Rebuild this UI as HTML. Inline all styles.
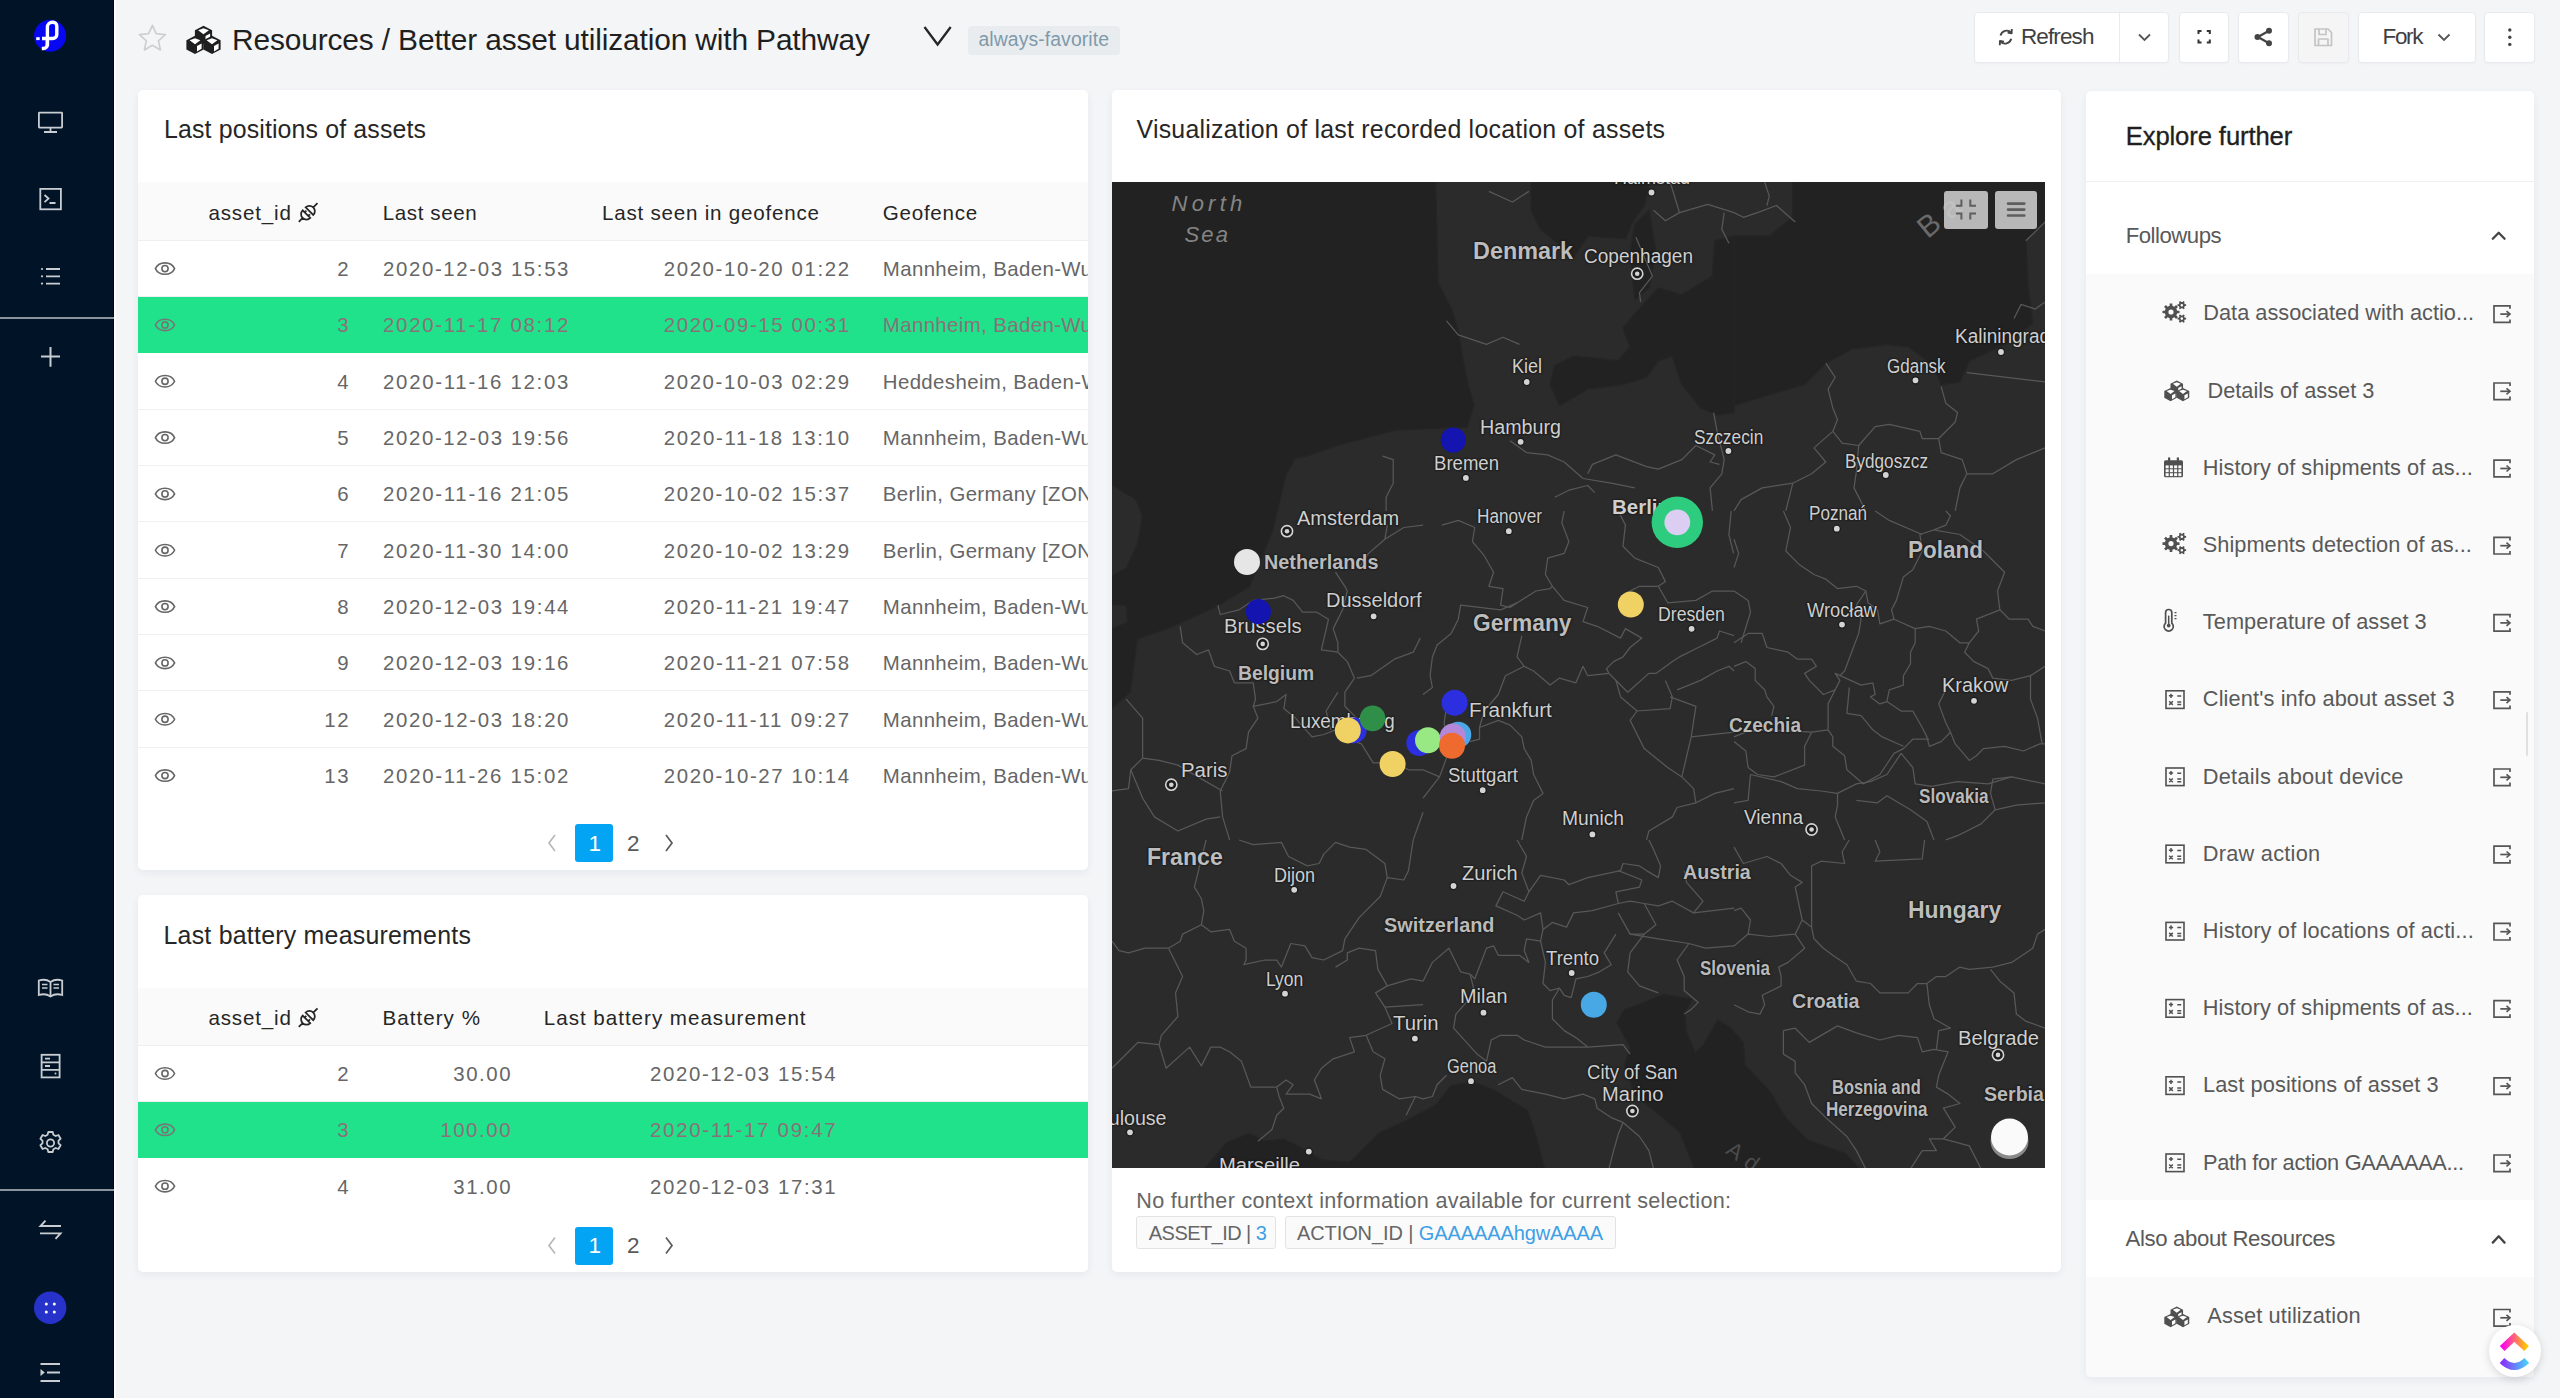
<!DOCTYPE html>
<html><head><meta charset="utf-8">
<style>
html,body{margin:0;padding:0}
body{width:2560px;height:1398px;overflow:hidden;background:#f3f5f7;font-family:"Liberation Sans",sans-serif;position:relative;color:#262626}
.a{position:absolute}
svg{position:absolute;overflow:visible}
.card{position:absolute;background:#fff;border-radius:5px;box-shadow:0 3px 8px rgba(30,50,80,0.06)}
.ctitle{position:absolute;font-size:25px;color:#262626;white-space:nowrap;line-height:30px;letter-spacing:0.1px}
.thead{position:absolute;left:0;background:#fafafa;border-bottom:1px solid #efefef;box-sizing:border-box}
.th{position:absolute;font-size:21px;color:#262626;white-space:nowrap;letter-spacing:0.5px;line-height:26px}
.row{position:absolute;left:0;height:56px;border-bottom:1px solid #f0f0f0;box-sizing:border-box;overflow:hidden}
.row.g{background:#20e28a;border-bottom-color:#20e28a}
.td{position:absolute;top:15px;font-size:20.5px;color:#666;white-space:nowrap;letter-spacing:1.55px;line-height:26px}
.row.g .td{color:#8a6e7a}
.eye{left:16px;top:20px}
.pg{position:absolute;font-size:22px;color:#595959;line-height:38px}
.pact{position:absolute;width:38px;height:38px;background:#03a4f4;border-radius:3px;color:#fff;font-size:22px;text-align:center;line-height:38px}
.btn{position:absolute;top:12px;height:51px;background:#fff;border:1px solid #e8eaed;border-radius:4px;box-sizing:border-box;box-shadow:0 1px 2px rgba(0,0,0,0.03)}
.item{position:absolute;left:0;width:449px;height:77px}
.itxt{position:absolute;left:116px;top:22px;font-size:21.5px;color:#595959;white-space:nowrap;letter-spacing:0.45px;line-height:28px}
.lbl{position:absolute;white-space:nowrap;color:#c9c9c9;font-size:18px;line-height:20px;text-shadow:0 0 2px #1a1a1a,0 0 2px #1a1a1a,1px 1px 1px #1a1a1a,-1px -1px 1px #1a1a1a}
.cty{position:absolute;white-space:nowrap;color:#bdbdbd;font-size:23px;font-weight:bold;line-height:26px;text-shadow:0 0 2px #151515,0 0 3px #151515,1px 1px 1px #151515,-1px -1px 1px #151515}
</style></head>
<body>
<div class="a" style="left:0;top:0;width:114px;height:1398px;background:#011427"></div>
<div class="a" style="left:112.5px;top:0;width:1.5px;height:1398px;background:#000510"></div>
<div class="a" style="left:114px;top:0;width:1.5px;height:1398px;background:#fdfdfd"></div>
<div class="a" style="left:0;top:317px;width:114px;height:2px;background:#8b939c"></div>
<div class="a" style="left:0;top:1189px;width:114px;height:2px;background:#8b939c"></div>
<svg width="114" height="1398" style="left:0;top:0" fill="none" stroke="#c9cdd2" stroke-width="1.8">
  <!-- logo -->
  <circle cx="50.1" cy="35.7" r="16" fill="#0707f2" stroke="none"/>
  <path d="M47.4,46 V27.3 a5,5 0 0 1 5,-5 h0.8 a3.6,3.6 0 0 1 3.6,3.6 V34.5 a4,4 0 0 1 -4,4 H42" stroke="#fff" stroke-width="3.4"/>
  <path d="M47.4,38 V44.5 a4,4 0 0 1 -4,4 h-1.6" stroke="#fff" stroke-width="3.4"/>
  <rect x="36.2" y="37.2" width="3.5" height="2.9" fill="#fff" stroke="none"/>
  <!-- monitor -->
  <rect x="38.9" y="112.6" width="23.2" height="15" rx="0.5"/>
  <path d="M50.5,127.6 V131.5 M44,132 H57"/>
  <!-- terminal -->
  <rect x="40.3" y="188.9" width="20.6" height="20.4"/>
  <path d="M44.5,195 L48.5,198.6 L44.5,202.2 M49.5,203 H55.5"/>
  <!-- list -->
  <path d="M46,269 H60 M46,276.3 H60 M46,283.6 H60"/>
  <circle cx="42" cy="269" r="1.1" fill="#c9cdd2" stroke="none"/>
  <circle cx="42" cy="276.3" r="1.1" fill="#c9cdd2" stroke="none"/>
  <circle cx="42" cy="283.6" r="1.1" fill="#c9cdd2" stroke="none"/>
  <!-- plus -->
  <path d="M41,356.5 H60 M50.5,347 V366.8" stroke-width="2"/>
  <!-- book -->
  <path d="M50.5,982 C47,979.5 42,979.5 38.8,980.5 V995 C42,994 47,994 50.5,996.5 C54,994 59,994 62.2,995 V980.5 C59,979.5 54,979.5 50.5,982 Z M50.5,982 V996"/>
  <path d="M42,984.5 H47.5 M42,988 H47.5 M53.5,984.5 H59 M53.5,988 H59" stroke-width="1.4"/>
  <!-- server -->
  <rect x="41.6" y="1054.8" width="18" height="22.6"/>
  <path d="M41.6,1062.3 H59.6 M41.6,1069.8 H59.6 M45,1058.6 H50 M45,1066 H50"/>
  <circle cx="55.5" cy="1073.6" r="1" fill="#c9cdd2" stroke="none"/>
  <!-- gear -->
  <path d="M48.3,1132 h4.4 l0.7,2.8 l2.3,1.2 l2.7,-1 l2.2,3.8 l-2.1,1.9 v2.6 l2.1,1.9 l-2.2,3.8 l-2.7,-1 l-2.3,1.2 l-0.7,2.8 h-4.4 l-0.7,-2.8 l-2.3,-1.2 l-2.7,1 l-2.2,-3.8 l2.1,-1.9 v-2.6 l-2.1,-1.9 l2.2,-3.8 l2.7,1 l2.3,-1.2 Z" stroke-linejoin="round"/>
  <circle cx="50.5" cy="1143" r="3.6"/>
  <!-- swap -->
  <path d="M61,1226 H40.5 L45.5,1220.6 M40,1233.4 H60.5 L55.5,1238.8" stroke-width="1.9"/>
  <!-- blue circle -->
  <circle cx="50.2" cy="1307.8" r="16.2" fill="#2632c9" stroke="none"/>
  <circle cx="46.3" cy="1304" r="1.5" fill="#fff" stroke="none"/>
  <circle cx="54.3" cy="1304" r="1.5" fill="#fff" stroke="none"/>
  <circle cx="46.3" cy="1312" r="1.5" fill="#fff" stroke="none"/>
  <circle cx="54.3" cy="1312" r="1.5" fill="#fff" stroke="none"/>
  <!-- indent -->
  <path d="M40.5,1364 H60 M47,1372.5 H60 M40.5,1381 H60" stroke-width="1.9"/>
  <path d="M40.5,1369 L44.8,1372.5 L40.5,1376 Z" fill="#c9cdd2" stroke="none"/>
</svg>
<svg width="1" height="1" style="left:0;top:0"><polygon points="152.40,25.30 156.16,33.72 165.33,34.70 158.49,40.88 160.39,49.90 152.40,45.30 144.41,49.90 146.31,40.88 139.47,34.70 148.64,33.72" fill="none" stroke="#cfcfcf" stroke-width="1.7" stroke-linejoin="round"/></svg>
<svg width="1" height="1" style="left:186px;top:24.6px"><g transform="scale(1.0)"><path d="M17.5,0.8000000000000014 L26.1,5.200000000000001 L26.1,14.4 L17.5,19.0 L8.9,14.4 L8.9,5.200000000000001 Z" fill="#1f1f1f"/><path d="M17.5,3.2000000000000015 L22.900000000000002,5.200000000000001 L17.5,9.3 L12.100000000000001,5.200000000000001 Z" fill="#fff"/><path d="M19.5,11.0 L24.1,8.600000000000001 L24.1,13.8 L19.5,16.4 Z" fill="#fff"/><path d="M9,10.8 L17.6,15.200000000000001 L17.6,24.4 L9,29.0 L0.40000000000000036,24.4 L0.40000000000000036,15.200000000000001 Z" fill="#1f1f1f"/><path d="M9,13.200000000000001 L14.400000000000002,15.200000000000001 L9,19.3 L3.6000000000000005,15.200000000000001 Z" fill="#fff"/><path d="M11,21.0 L15.600000000000001,18.6 L15.600000000000001,23.799999999999997 L11,26.4 Z" fill="#fff"/><path d="M26,10.8 L34.6,15.200000000000001 L34.6,24.4 L26,29.0 L17.4,24.4 L17.4,15.200000000000001 Z" fill="#1f1f1f"/><path d="M26,13.200000000000001 L31.400000000000002,15.200000000000001 L26,19.3 L20.599999999999998,15.200000000000001 Z" fill="#fff"/><path d="M28,21.0 L32.6,18.6 L32.6,23.799999999999997 L28,26.4 Z" fill="#fff"/></g></svg>
<div class="a" style="left:232.0px;top:24.9px;font-size:29.90px;line-height:29.90px;color:#1f1f1f;white-space:nowrap;letter-spacing:-0.14px;">Resources / Better asset utilization with Pathway</div>
<svg width="1" height="1" style="left:0;top:0"><polyline points="924.5,27 937.6,44.5 950.7,27" fill="none" stroke="#262626" stroke-width="2.3"/></svg>
<div class="a" style="left:968px;top:26px;width:152px;height:29px;background:#e8ecef;border-radius:4px"></div>
<div class="a" style="left:978.5px;top:29.8px;font-size:19.40px;line-height:19.40px;color:#7f9aaa;white-space:nowrap;letter-spacing:0.08px;">always-favorite</div>
<div class="btn" style="left:1974px;width:195px;background:#fff"></div>
<div class="btn" style="left:2178.6px;width:50px;background:#fff"></div>
<div class="btn" style="left:2237.7px;width:51px;background:#fff"></div>
<div class="btn" style="left:2297.5px;width:51px;background:#f5f5f5"></div>
<div class="btn" style="left:2357.7px;width:118px;background:#fff"></div>
<div class="btn" style="left:2484px;width:51px;background:#fff"></div>
<div class="a" style="left:2118.5px;top:12px;width:1px;height:52px;background:#e8eaed"></div>
<div class="a" style="left:2021.0px;top:26.2px;font-size:22.50px;line-height:22.50px;color:#3f3f3f;white-space:nowrap;letter-spacing:-0.88px;">Refresh</div>
<div class="a" style="left:2382.5px;top:26.2px;font-size:22.50px;line-height:22.50px;color:#3f3f3f;white-space:nowrap;letter-spacing:-1.33px;">Fork</div>
<svg width="1" height="1" style="left:0;top:0" fill="none" stroke="#444" stroke-width="1.9">
<path d="M2000.5,35.5 A6.3,6.3 0 0 1 2011.2,32.6" /><path d="M2011.8,29 L2011.6,33.2 L2007.6,32.6" stroke-linejoin="round"/>
<path d="M2011.2,38.8 A6.3,6.3 0 0 1 2000.5,41.6" /><path d="M1999.8,45.3 L2000,41 L2004,41.6" stroke-linejoin="round"/>
<polyline points="2139,34.5 2144.5,40 2150,34.5" stroke="#555" stroke-width="1.8"/>
<polyline points="2438.5,34.5 2444,40 2449.5,34.5" stroke="#555" stroke-width="1.8"/>
<path d="M2198.5,34 V31 H2201.5 M2206.8,31 H2209.8 V34 M2209.8,39.5 V42.5 H2206.8 M2201.5,42.5 H2198.5 V39.5" stroke="#333" stroke-width="2"/>
<path d="M2258,37 L2268.5,31 M2258,37 L2268.5,43" stroke="#444" stroke-width="2.2"/>
<path d="M2315,29 H2328 L2331.5,32.5 V45.5 H2315 Z M2319,29 V34.5 H2326 V29 M2318.5,45.5 V39 H2328 V45.5" stroke="#c4c4c4" stroke-width="1.7" stroke-linejoin="round"/>
</svg>
<svg width="1" height="1" style="left:0;top:0" fill="#444">
<circle cx="2257.5" cy="37" r="3"/><circle cx="2269" cy="30.8" r="3"/><circle cx="2269" cy="43.2" r="3"/>
<circle cx="2509.8" cy="30" r="1.7"/><circle cx="2509.8" cy="37.2" r="1.7"/><circle cx="2509.8" cy="44.4" r="1.7"/>
</svg>
<div class="card" style="left:138px;top:90px;width:950px;height:780px"></div>
<div class="a" style="left:164.0px;top:117.4px;font-size:24.90px;line-height:24.90px;color:#262626;white-space:nowrap;letter-spacing:0.14px;">Last positions of assets</div>
<div class="a" style="left:138px;top:182px;width:950px;height:58px;background:#fafafa;border-bottom:1px solid #eeeeee"></div>
<div class="a" style="left:208.4px;top:202.6px;font-size:20.60px;line-height:20.60px;color:#262626;white-space:nowrap;letter-spacing:0.84px;">asset_id</div>
<svg width="1" height="1" style="left:0;top:0" fill="none" stroke="#262626" stroke-width="1.75"><g transform="translate(308.3,212.3) rotate(-45)"><path d="M-2.6,-5.4 A5.4,5.4 0 0 0 -2.6,5.4 Z M-8,0 H-13.4 M-2.6,-2.6 H-0.2 M-2.6,2.6 H-0.2 M1.6,-5.4 A5.4,5.4 0 0 1 1.6,5.4 Z M7,0 H13"/></g></svg>
<div class="a" style="left:382.8px;top:202.6px;font-size:20.60px;line-height:20.60px;color:#262626;white-space:nowrap;letter-spacing:0.58px;">Last seen</div>
<div class="a" style="left:602.0px;top:202.6px;font-size:20.60px;line-height:20.60px;color:#262626;white-space:nowrap;letter-spacing:0.77px;">Last seen in geofence</div>
<div class="a" style="left:882.8px;top:202.6px;font-size:20.60px;line-height:20.60px;color:#262626;white-space:nowrap;letter-spacing:0.73px;">Geofence</div>
<div class="a" style="left:138px;top:240.60px;width:950px;height:56.33px;background:#fff;border-bottom:1px solid #f0f0f0;box-sizing:border-box;"></div>
<svg width="1" height="1" style="left:0;top:0" fill="none" stroke="#666" stroke-width="1.6"><path d="M155.4,268.6 C159,261.0 171,261.0 174.6,268.6 C171,276.20000000000005 159,276.20000000000005 155.4,268.6 Z"/><circle cx="165" cy="268.6" r="3.1"/></svg>
<div class="a" style="left:337.3px;top:258.9px;font-size:20.4px;line-height:20.4px;color:#666;white-space:nowrap;letter-spacing:1.60px;">2</div>
<div class="a" style="left:383.0px;top:258.9px;font-size:20.4px;line-height:20.4px;color:#666;white-space:nowrap;letter-spacing:1.63px;">2020-12-03 15:53</div>
<div class="a" style="left:663.7px;top:258.9px;font-size:20.4px;line-height:20.4px;color:#666;white-space:nowrap;letter-spacing:1.63px;">2020-10-20 01:22</div>
<div class="a" style="left:138px;top:296.93px;width:950px;height:56.33px;background:#20e28a;"></div>
<svg width="1" height="1" style="left:0;top:0" fill="none" stroke="#777" stroke-width="1.6"><path d="M155.4,324.93 C159,317.33 171,317.33 174.6,324.93 C171,332.53000000000003 159,332.53000000000003 155.4,324.93 Z"/><circle cx="165" cy="324.93" r="3.1"/></svg>
<div class="a" style="left:337.3px;top:315.3px;font-size:20.4px;line-height:20.4px;color:#8b7179;white-space:nowrap;letter-spacing:1.60px;">3</div>
<div class="a" style="left:383.0px;top:315.3px;font-size:20.4px;line-height:20.4px;color:#8b7179;white-space:nowrap;letter-spacing:1.73px;">2020-11-17 08:12</div>
<div class="a" style="left:663.7px;top:315.3px;font-size:20.4px;line-height:20.4px;color:#8b7179;white-space:nowrap;letter-spacing:1.63px;">2020-09-15 00:31</div>
<div class="a" style="left:138px;top:353.26px;width:950px;height:56.33px;background:#fff;border-bottom:1px solid #f0f0f0;box-sizing:border-box;"></div>
<svg width="1" height="1" style="left:0;top:0" fill="none" stroke="#666" stroke-width="1.6"><path d="M155.4,381.26 C159,373.65999999999997 171,373.65999999999997 174.6,381.26 C171,388.86 159,388.86 155.4,381.26 Z"/><circle cx="165" cy="381.26" r="3.1"/></svg>
<div class="a" style="left:337.3px;top:371.6px;font-size:20.4px;line-height:20.4px;color:#666;white-space:nowrap;letter-spacing:1.60px;">4</div>
<div class="a" style="left:383.0px;top:371.6px;font-size:20.4px;line-height:20.4px;color:#666;white-space:nowrap;letter-spacing:1.73px;">2020-11-16 12:03</div>
<div class="a" style="left:663.7px;top:371.6px;font-size:20.4px;line-height:20.4px;color:#666;white-space:nowrap;letter-spacing:1.63px;">2020-10-03 02:29</div>
<div class="a" style="left:138px;top:409.59px;width:950px;height:56.33px;background:#fff;border-bottom:1px solid #f0f0f0;box-sizing:border-box;"></div>
<svg width="1" height="1" style="left:0;top:0" fill="none" stroke="#666" stroke-width="1.6"><path d="M155.4,437.59000000000003 C159,429.99 171,429.99 174.6,437.59000000000003 C171,445.19000000000005 159,445.19000000000005 155.4,437.59000000000003 Z"/><circle cx="165" cy="437.59000000000003" r="3.1"/></svg>
<div class="a" style="left:337.3px;top:427.9px;font-size:20.4px;line-height:20.4px;color:#666;white-space:nowrap;letter-spacing:1.60px;">5</div>
<div class="a" style="left:383.0px;top:427.9px;font-size:20.4px;line-height:20.4px;color:#666;white-space:nowrap;letter-spacing:1.63px;">2020-12-03 19:56</div>
<div class="a" style="left:663.7px;top:427.9px;font-size:20.4px;line-height:20.4px;color:#666;white-space:nowrap;letter-spacing:1.73px;">2020-11-18 13:10</div>
<div class="a" style="left:138px;top:465.92px;width:950px;height:56.33px;background:#fff;border-bottom:1px solid #f0f0f0;box-sizing:border-box;"></div>
<svg width="1" height="1" style="left:0;top:0" fill="none" stroke="#666" stroke-width="1.6"><path d="M155.4,493.91999999999996 C159,486.31999999999994 171,486.31999999999994 174.6,493.91999999999996 C171,501.52 159,501.52 155.4,493.91999999999996 Z"/><circle cx="165" cy="493.91999999999996" r="3.1"/></svg>
<div class="a" style="left:337.3px;top:484.3px;font-size:20.4px;line-height:20.4px;color:#666;white-space:nowrap;letter-spacing:1.60px;">6</div>
<div class="a" style="left:383.0px;top:484.3px;font-size:20.4px;line-height:20.4px;color:#666;white-space:nowrap;letter-spacing:1.73px;">2020-11-16 21:05</div>
<div class="a" style="left:663.7px;top:484.3px;font-size:20.4px;line-height:20.4px;color:#666;white-space:nowrap;letter-spacing:1.63px;">2020-10-02 15:37</div>
<div class="a" style="left:138px;top:522.25px;width:950px;height:56.33px;background:#fff;border-bottom:1px solid #f0f0f0;box-sizing:border-box;"></div>
<svg width="1" height="1" style="left:0;top:0" fill="none" stroke="#666" stroke-width="1.6"><path d="M155.4,550.25 C159,542.65 171,542.65 174.6,550.25 C171,557.85 159,557.85 155.4,550.25 Z"/><circle cx="165" cy="550.25" r="3.1"/></svg>
<div class="a" style="left:337.3px;top:540.6px;font-size:20.4px;line-height:20.4px;color:#666;white-space:nowrap;letter-spacing:1.60px;">7</div>
<div class="a" style="left:383.0px;top:540.6px;font-size:20.4px;line-height:20.4px;color:#666;white-space:nowrap;letter-spacing:1.73px;">2020-11-30 14:00</div>
<div class="a" style="left:663.7px;top:540.6px;font-size:20.4px;line-height:20.4px;color:#666;white-space:nowrap;letter-spacing:1.63px;">2020-10-02 13:29</div>
<div class="a" style="left:138px;top:578.58px;width:950px;height:56.33px;background:#fff;border-bottom:1px solid #f0f0f0;box-sizing:border-box;"></div>
<svg width="1" height="1" style="left:0;top:0" fill="none" stroke="#666" stroke-width="1.6"><path d="M155.4,606.58 C159,598.98 171,598.98 174.6,606.58 C171,614.1800000000001 159,614.1800000000001 155.4,606.58 Z"/><circle cx="165" cy="606.58" r="3.1"/></svg>
<div class="a" style="left:337.3px;top:596.9px;font-size:20.4px;line-height:20.4px;color:#666;white-space:nowrap;letter-spacing:1.60px;">8</div>
<div class="a" style="left:383.0px;top:596.9px;font-size:20.4px;line-height:20.4px;color:#666;white-space:nowrap;letter-spacing:1.63px;">2020-12-03 19:44</div>
<div class="a" style="left:663.7px;top:596.9px;font-size:20.4px;line-height:20.4px;color:#666;white-space:nowrap;letter-spacing:1.73px;">2020-11-21 19:47</div>
<div class="a" style="left:138px;top:634.91px;width:950px;height:56.33px;background:#fff;border-bottom:1px solid #f0f0f0;box-sizing:border-box;"></div>
<svg width="1" height="1" style="left:0;top:0" fill="none" stroke="#666" stroke-width="1.6"><path d="M155.4,662.91 C159,655.31 171,655.31 174.6,662.91 C171,670.51 159,670.51 155.4,662.91 Z"/><circle cx="165" cy="662.91" r="3.1"/></svg>
<div class="a" style="left:337.3px;top:653.2px;font-size:20.4px;line-height:20.4px;color:#666;white-space:nowrap;letter-spacing:1.60px;">9</div>
<div class="a" style="left:383.0px;top:653.2px;font-size:20.4px;line-height:20.4px;color:#666;white-space:nowrap;letter-spacing:1.63px;">2020-12-03 19:16</div>
<div class="a" style="left:663.7px;top:653.2px;font-size:20.4px;line-height:20.4px;color:#666;white-space:nowrap;letter-spacing:1.73px;">2020-11-21 07:58</div>
<div class="a" style="left:138px;top:691.24px;width:950px;height:56.33px;background:#fff;border-bottom:1px solid #f0f0f0;box-sizing:border-box;"></div>
<svg width="1" height="1" style="left:0;top:0" fill="none" stroke="#666" stroke-width="1.6"><path d="M155.4,719.24 C159,711.64 171,711.64 174.6,719.24 C171,726.84 159,726.84 155.4,719.24 Z"/><circle cx="165" cy="719.24" r="3.1"/></svg>
<div class="a" style="left:324.3px;top:709.6px;font-size:20.4px;line-height:20.4px;color:#666;white-space:nowrap;letter-spacing:1.60px;">12</div>
<div class="a" style="left:383.0px;top:709.6px;font-size:20.4px;line-height:20.4px;color:#666;white-space:nowrap;letter-spacing:1.63px;">2020-12-03 18:20</div>
<div class="a" style="left:663.7px;top:709.6px;font-size:20.4px;line-height:20.4px;color:#666;white-space:nowrap;letter-spacing:1.83px;">2020-11-11 09:27</div>
<div class="a" style="left:138px;top:747.57px;width:950px;height:56.33px;background:#fff;"></div>
<svg width="1" height="1" style="left:0;top:0" fill="none" stroke="#666" stroke-width="1.6"><path d="M155.4,775.5699999999999 C159,767.9699999999999 171,767.9699999999999 174.6,775.5699999999999 C171,783.17 159,783.17 155.4,775.5699999999999 Z"/><circle cx="165" cy="775.5699999999999" r="3.1"/></svg>
<div class="a" style="left:324.3px;top:765.9px;font-size:20.4px;line-height:20.4px;color:#666;white-space:nowrap;letter-spacing:1.60px;">13</div>
<div class="a" style="left:383.0px;top:765.9px;font-size:20.4px;line-height:20.4px;color:#666;white-space:nowrap;letter-spacing:1.73px;">2020-11-26 15:02</div>
<div class="a" style="left:663.7px;top:765.9px;font-size:20.4px;line-height:20.4px;color:#666;white-space:nowrap;letter-spacing:1.63px;">2020-10-27 10:14</div>
<div class="a" style="left:870px;top:240px;width:218px;height:570px;overflow:hidden">
<div class="a" style="left:12.8px;top:18.9px;font-size:20.4px;line-height:20.4px;color:#666;white-space:nowrap;letter-spacing:0.39px">Mannheim, Baden-Wurttemberg, Germany</div>
<div class="a" style="left:12.8px;top:75.3px;font-size:20.4px;line-height:20.4px;color:#8b7179;white-space:nowrap;letter-spacing:0.39px">Mannheim, Baden-Wurttemberg, Germany</div>
<div class="a" style="left:12.8px;top:131.6px;font-size:20.4px;line-height:20.4px;color:#666;white-space:nowrap;letter-spacing:0.39px">Heddesheim, Baden-Wurttemberg, Germany</div>
<div class="a" style="left:12.8px;top:187.9px;font-size:20.4px;line-height:20.4px;color:#666;white-space:nowrap;letter-spacing:0.39px">Mannheim, Baden-Wurttemberg, Germany</div>
<div class="a" style="left:12.8px;top:244.3px;font-size:20.4px;line-height:20.4px;color:#666;white-space:nowrap;letter-spacing:0.39px">Berlin, Germany [ZONE 1]</div>
<div class="a" style="left:12.8px;top:300.6px;font-size:20.4px;line-height:20.4px;color:#666;white-space:nowrap;letter-spacing:0.39px">Berlin, Germany [ZONE 1]</div>
<div class="a" style="left:12.8px;top:356.9px;font-size:20.4px;line-height:20.4px;color:#666;white-space:nowrap;letter-spacing:0.39px">Mannheim, Baden-Wurttemberg, Germany</div>
<div class="a" style="left:12.8px;top:413.2px;font-size:20.4px;line-height:20.4px;color:#666;white-space:nowrap;letter-spacing:0.39px">Mannheim, Baden-Wurttemberg, Germany</div>
<div class="a" style="left:12.8px;top:469.6px;font-size:20.4px;line-height:20.4px;color:#666;white-space:nowrap;letter-spacing:0.39px">Mannheim, Baden-Wurttemberg, Germany</div>
<div class="a" style="left:12.8px;top:525.9px;font-size:20.4px;line-height:20.4px;color:#666;white-space:nowrap;letter-spacing:0.39px">Mannheim, Baden-Wurttemberg, Germany</div>
</div>
<svg width="1" height="1" style="left:0;top:0"><polyline points="555,835 549,843 555,851" fill="none" stroke="#b8b8b8" stroke-width="1.7"/></svg>
<div class="pact" style="left:575px;top:824.3px"></div>
<div class="a" style="left:588.5px;top:832.6px;font-size:22.50px;line-height:22.50px;color:#fff;white-space:nowrap;letter-spacing:0.00px;">1</div>
<div class="a" style="left:627.0px;top:832.6px;font-size:22.50px;line-height:22.50px;color:#595959;white-space:nowrap;letter-spacing:0.00px;">2</div>
<svg width="1" height="1" style="left:0;top:0"><polyline points="666,835 672,843 666,851" fill="none" stroke="#595959" stroke-width="1.7"/></svg>
<div class="card" style="left:138px;top:895px;width:950px;height:377px"></div>
<div class="a" style="left:163.5px;top:922.6px;font-size:24.90px;line-height:24.90px;color:#262626;white-space:nowrap;letter-spacing:0.24px;">Last battery measurements</div>
<div class="a" style="left:138px;top:987.5px;width:950px;height:57.5px;background:#fafafa;border-bottom:1px solid #eeeeee"></div>
<div class="a" style="left:208.4px;top:1007.8px;font-size:20.60px;line-height:20.60px;color:#262626;white-space:nowrap;letter-spacing:0.84px;">asset_id</div>
<svg width="1" height="1" style="left:0;top:0" fill="none" stroke="#262626" stroke-width="1.75"><g transform="translate(308.3,1017.5) rotate(-45)"><path d="M-2.6,-5.4 A5.4,5.4 0 0 0 -2.6,5.4 Z M-8,0 H-13.4 M-2.6,-2.6 H-0.2 M-2.6,2.6 H-0.2 M1.6,-5.4 A5.4,5.4 0 0 1 1.6,5.4 Z M7,0 H13"/></g></svg>
<div class="a" style="left:382.5px;top:1007.8px;font-size:20.60px;line-height:20.60px;color:#262626;white-space:nowrap;letter-spacing:1.03px;">Battery %</div>
<div class="a" style="left:543.8px;top:1007.8px;font-size:20.60px;line-height:20.60px;color:#262626;white-space:nowrap;letter-spacing:0.98px;">Last battery measurement</div>
<div class="a" style="left:138px;top:1045.50px;width:950px;height:56.33px;background:#fff;border-bottom:1px solid #f0f0f0;box-sizing:border-box;"></div>
<svg width="1" height="1" style="left:0;top:0" fill="none" stroke="#666" stroke-width="1.6"><path d="M155.4,1073.5 C159,1065.9 171,1065.9 174.6,1073.5 C171,1081.1 159,1081.1 155.4,1073.5 Z"/><circle cx="165" cy="1073.5" r="3.1"/></svg>
<div class="a" style="left:337.3px;top:1063.8px;font-size:20.4px;line-height:20.4px;color:#666;white-space:nowrap;letter-spacing:1.60px;">2</div>
<div class="a" style="left:453.2px;top:1063.8px;font-size:20.4px;line-height:20.4px;color:#666;white-space:nowrap;letter-spacing:1.60px;">30.00</div>
<div class="a" style="left:650.0px;top:1063.8px;font-size:20.4px;line-height:20.4px;color:#666;white-space:nowrap;letter-spacing:1.64px;">2020-12-03 15:54</div>
<div class="a" style="left:138px;top:1101.83px;width:950px;height:56.33px;background:#20e28a;"></div>
<svg width="1" height="1" style="left:0;top:0" fill="none" stroke="#777" stroke-width="1.6"><path d="M155.4,1129.83 C159,1122.23 171,1122.23 174.6,1129.83 C171,1137.4299999999998 159,1137.4299999999998 155.4,1129.83 Z"/><circle cx="165" cy="1129.83" r="3.1"/></svg>
<div class="a" style="left:337.3px;top:1120.2px;font-size:20.4px;line-height:20.4px;color:#8b7179;white-space:nowrap;letter-spacing:1.60px;">3</div>
<div class="a" style="left:440.2px;top:1120.2px;font-size:20.4px;line-height:20.4px;color:#8b7179;white-space:nowrap;letter-spacing:1.60px;">100.00</div>
<div class="a" style="left:650.0px;top:1120.2px;font-size:20.4px;line-height:20.4px;color:#8b7179;white-space:nowrap;letter-spacing:1.74px;">2020-11-17 09:47</div>
<div class="a" style="left:138px;top:1158.16px;width:950px;height:56.33px;background:#fff;"></div>
<svg width="1" height="1" style="left:0;top:0" fill="none" stroke="#666" stroke-width="1.6"><path d="M155.4,1186.16 C159,1178.5600000000002 171,1178.5600000000002 174.6,1186.16 C171,1193.76 159,1193.76 155.4,1186.16 Z"/><circle cx="165" cy="1186.16" r="3.1"/></svg>
<div class="a" style="left:337.3px;top:1176.5px;font-size:20.4px;line-height:20.4px;color:#666;white-space:nowrap;letter-spacing:1.60px;">4</div>
<div class="a" style="left:453.2px;top:1176.5px;font-size:20.4px;line-height:20.4px;color:#666;white-space:nowrap;letter-spacing:1.60px;">31.00</div>
<div class="a" style="left:650.0px;top:1176.5px;font-size:20.4px;line-height:20.4px;color:#666;white-space:nowrap;letter-spacing:1.64px;">2020-12-03 17:31</div>
<svg width="1" height="1" style="left:0;top:0"><polyline points="555,1237.5 549,1245.5 555,1253.5" fill="none" stroke="#b8b8b8" stroke-width="1.7"/></svg>
<div class="pact" style="left:575px;top:1226.5px"></div>
<div class="a" style="left:588.5px;top:1234.8px;font-size:22.50px;line-height:22.50px;color:#fff;white-space:nowrap;letter-spacing:0.00px;">1</div>
<div class="a" style="left:627.0px;top:1234.8px;font-size:22.50px;line-height:22.50px;color:#595959;white-space:nowrap;letter-spacing:0.00px;">2</div>
<svg width="1" height="1" style="left:0;top:0"><polyline points="666,1237.5 672,1245.5 666,1253.5" fill="none" stroke="#595959" stroke-width="1.7"/></svg>
<div class="card" style="left:1112px;top:90px;width:949px;height:1182px"></div>
<div class="a" style="left:1136.5px;top:117.4px;font-size:24.90px;line-height:24.90px;color:#262626;white-space:nowrap;letter-spacing:0.24px;">Visualization of last recorded location of assets</div>
<div class="a" style="left:1112px;top:182px;width:933px;height:986px;background:#2b2b2b;overflow:hidden">
<svg width="1" height="1" style="left:-1112px;top:-182px"><polygon points="1112.0,182.0 1435.5,182.0 1438.0,283.0 1452.0,310.0 1458.0,330.0 1463.0,360.0 1468.0,385.0 1474.0,405.0 1467.0,427.0 1396.0,430.0 1339.0,444.7 1310.0,455.0 1295.2,458.3 1286.0,474.3 1272.3,531.6 1249.4,586.5 1215.0,607.0 1169.2,627.8 1137.2,639.0 1130.3,692.0 1112.0,708.0" fill="#222222" stroke="#252525" stroke-width="1.5" stroke-linejoin="round"/><polygon points="1658.3,287.9 1681.8,294.9 1712.4,276.1 1714.8,240.8 1734.1,236.1 1734.1,412.6 1717.1,414.9 1700.6,407.9 1681.8,384.4 1672.4,356.1 1658.3,360.8 1646.5,377.3 1623.0,384.4 1587.7,389.1 1559.5,405.5 1550.1,384.4 1554.8,365.5 1573.6,356.1 1618.3,360.8 1630.1,346.7 1623.0,327.9 1634.8,313.8" fill="#222222" stroke="#252525" stroke-width="1.5" stroke-linejoin="round"/><polygon points="1734.0,236.1 1769.3,236.1 1792.8,217.3 1792.8,182.0 2045.1,182.0 2045.1,222.0 2025.8,240.8 2028.1,287.9 2032.8,323.2 2004.6,344.4 1969.3,360.8 1959.9,382.0 1941.1,384.4 1934.0,365.5 1908.1,346.7 1886.9,344.4 1851.6,349.1 1825.8,363.2 1804.6,384.4 1764.6,396.1 1734.0,405.5" fill="#222222" stroke="#252525" stroke-width="1.5" stroke-linejoin="round"/><polygon points="1531.2,182.0 1648.9,182.0 1644.2,205.5 1632.4,222.0 1625.4,238.5 1587.7,236.1 1573.6,257.3 1554.8,240.8 1540.6,229.1 1531.2,210.2" fill="#222222" stroke="#252525" stroke-width="1.5" stroke-linejoin="round"/><polygon points="1634.8,224.4 1648.9,210.2 1655.9,252.6 1648.9,287.9 1634.8,299.6 1630.1,252.6" fill="#222222" stroke="#252525" stroke-width="1.5" stroke-linejoin="round"/><polygon points="1663.7,994.6 1692.2,999.0 1684.7,1012.6 1686.2,1032.0 1695.2,1053.0 1704.2,1044.0 1717.7,1020.0 1729.8,1027.6 1743.3,1042.6 1744.8,1065.0 1770.3,1092.0 1785.4,1117.7 1808.0,1140.3 1845.5,1153.8 1860.5,1170.0 1695.2,1170.0 1680.2,1132.8 1657.7,1113.2 1635.0,1095.0 1624.6,1065.0 1630.6,1047.0 1617.0,1023.0 1624.6,1009.6 1638.0,1005.0" fill="#222222" stroke="#252525" stroke-width="1.5" stroke-linejoin="round"/><polygon points="1203.5,1170.0 1226.4,1143.0 1249.2,1133.4 1264.5,1141.0 1283.6,1139.0 1302.6,1148.7 1321.7,1160.0 1350.3,1162.0 1378.9,1133.4 1407.5,1120.0 1436.0,1104.8 1451.3,1085.8 1472.3,1082.0 1493.2,1089.6 1527.6,1110.6 1535.2,1133.4 1544.7,1170.0" fill="#222222" stroke="#252525" stroke-width="1.5" stroke-linejoin="round"/><polygon points="1112.0,485.8 1134.9,499.5 1141.8,515.6 1137.2,543.0 1125.7,568.0 1112.0,575.0" fill="#2b2b2b" stroke="#2a2a2a" stroke-width="1"/><polygon points="1112.0,605.0 1125.7,606.0 1127.0,622.0 1112.0,628.0" fill="#2b2b2b" stroke="#2a2a2a" stroke-width="1"/><polyline points="1382.6,456.1 1393.2,459.6 1393.2,483.2 1386.1,497.3 1386.1,510.9" fill="none" stroke="#585858" stroke-width="1.25" stroke-linejoin="round"/><polyline points="1446.5,320.8 1458.3,334.9 1486.5,344.4 1503.0,337.3 1519.5,344.4" fill="none" stroke="#585858" stroke-width="1.25" stroke-linejoin="round"/><polyline points="1488.9,191.4 1512.4,202.0 1528.9,191.4" fill="none" stroke="#585858" stroke-width="1.25" stroke-linejoin="round"/><polyline points="1670.1,182.0 1679.5,212.6 1707.7,204.4 1734.1,212.6" fill="none" stroke="#585858" stroke-width="1.25" stroke-linejoin="round"/><polyline points="1653.6,210.2 1665.4,220.8 1679.5,212.6" fill="none" stroke="#585858" stroke-width="1.25" stroke-linejoin="round"/><polyline points="1724.2,212.6 1721.8,229.1 1728.9,243.2" fill="none" stroke="#585858" stroke-width="1.25" stroke-linejoin="round"/><polyline points="1635.9,237.3 1652.4,276.1 1639.5,292.6 1640.6,302.0" fill="none" stroke="#585858" stroke-width="1.25" stroke-linejoin="round"/><polyline points="1510.1,440.8 1526.5,452.6 1547.7,454.9 1564.2,462.0 1583.0,478.5 1611.2,483.2 1634.8,487.9" fill="none" stroke="#585858" stroke-width="1.25" stroke-linejoin="round"/><polyline points="1587.7,473.8 1592.4,464.4 1615.9,454.9 1646.5,466.7 1658.3,469.1 1681.8,459.6 1695.9,445.5 1714.8,454.9 1710.1,462.0 1719.5,464.4" fill="none" stroke="#585858" stroke-width="1.25" stroke-linejoin="round"/><polyline points="1713.6,412.6 1717.1,431.4 1724.2,459.6 1721.8,473.8 1710.1,487.9 1712.4,510.9" fill="none" stroke="#585858" stroke-width="1.25" stroke-linejoin="round"/><polyline points="1554.8,497.3 1568.9,490.2 1587.7,485.5 1594.8,492.6" fill="none" stroke="#585858" stroke-width="1.25" stroke-linejoin="round"/><polyline points="1734.0,212.6 1743.4,217.3 1757.5,212.6 1776.4,205.5 1795.2,222.0" fill="none" stroke="#585858" stroke-width="1.25" stroke-linejoin="round"/><polyline points="1764.6,182.0 1769.3,196.1 1766.9,205.5" fill="none" stroke="#585858" stroke-width="1.25" stroke-linejoin="round"/><polyline points="1966.9,372.6 2045.1,382.0" fill="none" stroke="#585858" stroke-width="1.25" stroke-linejoin="round"/><polyline points="2014.0,318.5 2021.1,304.4 2035.2,309.1 2045.1,302.0" fill="none" stroke="#585858" stroke-width="1.25" stroke-linejoin="round"/><polyline points="2045.1,222.0 2025.8,240.8" fill="none" stroke="#585858" stroke-width="1.25" stroke-linejoin="round"/><polyline points="1825.8,363.2 1835.2,377.3 1828.1,389.1 1832.8,407.9 1837.5,419.6 1832.8,431.4 1842.2,443.2 1858.7,445.5 1875.2,426.7 1889.3,424.4 1919.9,431.4 1922.2,438.5 1938.7,438.5 1955.2,422.0 1957.5,412.6 1945.8,403.2 1941.1,386.7" fill="none" stroke="#585858" stroke-width="1.25" stroke-linejoin="round"/><polyline points="1938.7,438.5 1941.1,452.6 1962.2,459.6 1966.9,473.8 1992.8,473.8 2016.4,459.6 2045.1,447.9" fill="none" stroke="#585858" stroke-width="1.25" stroke-linejoin="round"/><polyline points="1832.8,431.4 1814.0,447.9 1825.8,462.0 1811.6,473.8 1792.8,483.2 1762.2,487.9 1741.1,499.6 1734.0,510.9" fill="none" stroke="#585858" stroke-width="1.25" stroke-linejoin="round"/><polyline points="1858.7,445.5 1856.4,471.4 1854.0,487.9 1865.8,510.9" fill="none" stroke="#585858" stroke-width="1.25" stroke-linejoin="round"/><polyline points="1966.9,473.8 1959.9,487.9 1955.2,510.9" fill="none" stroke="#585858" stroke-width="1.25" stroke-linejoin="round"/><polyline points="1792.8,483.2 1785.8,510.9" fill="none" stroke="#585858" stroke-width="1.25" stroke-linejoin="round"/><polyline points="1180.2,626.3 1182.6,642.8 1196.7,654.5 1208.5,649.8 1214.4,666.3 1229.6,671.0 1234.4,682.8 1253.2,682.8 1255.5,699.2 1253.2,706.3 1276.7,701.6 1286.1,694.5 1283.8,708.6 1295.5,718.1 1312.0,736.9 1323.8,734.5 1335.5,729.8" fill="none" stroke="#585858" stroke-width="1.25" stroke-linejoin="round"/><polyline points="1217.9,605.1 1220.2,614.5 1239.1,609.8 1253.2,600.4 1274.4,598.1 1283.8,595.7 1293.2,600.4 1302.6,612.2 1316.7,612.2 1328.5,619.2 1321.4,649.8 1337.9,652.2 1347.3,661.6 1354.4,678.1" fill="none" stroke="#585858" stroke-width="1.25" stroke-linejoin="round"/><polyline points="1335.5,572.2 1344.9,586.3 1347.3,591.0 1342.6,609.8 1333.2,628.6 1337.9,642.8 1337.9,652.2" fill="none" stroke="#585858" stroke-width="1.25" stroke-linejoin="round"/><polyline points="1354.4,678.1 1344.9,692.2 1344.9,706.3 1356.7,718.1" fill="none" stroke="#585858" stroke-width="1.25" stroke-linejoin="round"/><polyline points="1337.9,692.2 1326.1,711.0 1330.8,729.8" fill="none" stroke="#585858" stroke-width="1.25" stroke-linejoin="round"/><polyline points="1335.5,734.5 1361.4,743.9 1373.2,762.8 1394.4,762.8 1408.5,769.8 1423.1,769.8" fill="none" stroke="#585858" stroke-width="1.25" stroke-linejoin="round"/><polyline points="1356.7,678.1 1370.8,675.7 1394.4,659.2 1413.2,652.2 1420.2,638.1" fill="none" stroke="#585858" stroke-width="1.25" stroke-linejoin="round"/><polyline points="1387.3,525.1 1384.9,539.2 1403.8,527.5 1423.1,525.1" fill="none" stroke="#585858" stroke-width="1.25" stroke-linejoin="round"/><polyline points="1384.9,539.2 1368.5,553.4 1359.1,567.5" fill="none" stroke="#585858" stroke-width="1.25" stroke-linejoin="round"/><polyline points="1253.2,706.3 1257.9,718.1 1248.5,732.2 1246.1,748.6 1232.0,755.7 1229.6,772.2 1220.2,791.0 1222.6,816.9 1229.6,839.9" fill="none" stroke="#585858" stroke-width="1.25" stroke-linejoin="round"/><polyline points="1112.0,791.0 1128.5,788.6 1130.8,769.8 1142.6,758.1 1142.6,729.8 1142.6,718.1 1126.1,699.2" fill="none" stroke="#585858" stroke-width="1.25" stroke-linejoin="round"/><polyline points="1130.8,769.8 1142.6,798.1 1154.4,816.9 1177.9,831.0 1206.1,819.2 1220.2,816.9" fill="none" stroke="#585858" stroke-width="1.25" stroke-linejoin="round"/><polyline points="1142.6,758.1 1159.1,760.4 1177.9,765.1 1206.1,781.6 1222.6,791.0" fill="none" stroke="#585858" stroke-width="1.25" stroke-linejoin="round"/><polyline points="1423.1,812.2 1413.2,839.9" fill="none" stroke="#585858" stroke-width="1.25" stroke-linejoin="round"/><polyline points="1441.8,525.1 1458.3,520.4 1474.8,527.5 1472.4,541.6 1484.2,555.7 1493.6,572.2 1488.9,586.3 1503.0,588.6 1500.6,605.1 1510.1,607.5 1517.1,602.8 1535.9,591.0 1550.1,588.6 1552.4,586.3 1545.4,574.5 1547.7,558.1 1564.2,553.4 1568.9,541.6 1561.8,522.8 1564.2,511.0" fill="none" stroke="#585858" stroke-width="1.25" stroke-linejoin="round"/><polyline points="1552.4,586.3 1564.2,600.4 1587.7,607.5 1583.0,621.6 1597.1,626.3 1620.6,638.1 1625.4,628.6 1641.8,638.1 1630.1,647.5 1623.0,656.9 1613.6,661.6 1606.5,668.6 1608.9,673.4" fill="none" stroke="#585858" stroke-width="1.25" stroke-linejoin="round"/><polyline points="1517.1,602.8 1500.6,609.8 1460.6,605.1 1458.3,619.2 1451.2,633.4 1437.1,645.1 1432.4,656.9 1430.1,675.7 1432.4,687.5 1423.0,694.5" fill="none" stroke="#585858" stroke-width="1.25" stroke-linejoin="round"/><polyline points="1521.8,635.7 1517.1,656.9 1524.2,666.3 1533.6,671.0 1550.1,685.1 1559.5,678.1 1575.9,682.8 1583.0,666.3 1587.7,675.7 1608.9,673.4" fill="none" stroke="#585858" stroke-width="1.25" stroke-linejoin="round"/><polyline points="1524.2,666.3 1505.4,675.7 1498.3,694.5 1484.2,711.0 1479.5,727.5 1479.5,739.2 1470.1,741.6" fill="none" stroke="#585858" stroke-width="1.25" stroke-linejoin="round"/><polyline points="1618.3,511.0 1625.4,525.1 1623.0,546.3 1634.8,558.1 1658.3,567.5 1665.4,581.6 1658.3,586.3 1639.5,586.3 1625.4,593.4" fill="none" stroke="#585858" stroke-width="1.25" stroke-linejoin="round"/><polyline points="1658.3,586.3 1667.7,602.8 1695.9,600.4 1712.4,591.0 1734.1,591.0" fill="none" stroke="#585858" stroke-width="1.25" stroke-linejoin="round"/><polyline points="1731.2,511.0 1728.9,534.5 1733.6,553.4" fill="none" stroke="#585858" stroke-width="1.25" stroke-linejoin="round"/><polyline points="1608.9,673.4 1618.3,682.8 1627.7,692.2 1648.9,673.4 1655.9,673.4 1672.4,661.6 1679.5,656.9 1698.3,647.5 1717.1,638.1 1719.5,631.0 1734.1,635.7" fill="none" stroke="#585858" stroke-width="1.25" stroke-linejoin="round"/><polyline points="1615.9,680.4 1620.6,696.9 1637.1,711.0 1630.1,720.4 1634.8,729.8 1644.2,748.6 1667.7,767.5 1681.8,776.9 1693.6,788.6 1695.9,802.8 1677.1,807.5 1672.4,816.9 1648.9,831.0 1646.5,839.9" fill="none" stroke="#585858" stroke-width="1.25" stroke-linejoin="round"/><polyline points="1637.1,711.0 1670.1,708.6 1672.4,696.9 1665.4,680.4" fill="none" stroke="#585858" stroke-width="1.25" stroke-linejoin="round"/><polyline points="1670.1,696.9 1695.9,706.3 1691.2,736.9 1681.8,776.9" fill="none" stroke="#585858" stroke-width="1.25" stroke-linejoin="round"/><polyline points="1691.2,736.9 1734.1,732.2" fill="none" stroke="#585858" stroke-width="1.25" stroke-linejoin="round"/><polyline points="1677.1,689.8 1700.6,680.4 1717.1,671.0 1728.9,666.3 1734.1,671.0" fill="none" stroke="#585858" stroke-width="1.25" stroke-linejoin="round"/><polyline points="1446.5,706.3 1444.2,722.8 1446.5,741.6 1446.5,758.1 1439.5,776.9 1423.0,798.1" fill="none" stroke="#585858" stroke-width="1.25" stroke-linejoin="round"/><polyline points="1423.0,769.8 1439.5,776.9" fill="none" stroke="#585858" stroke-width="1.25" stroke-linejoin="round"/><polyline points="1479.5,727.5 1498.3,720.4 1510.1,725.1 1521.8,736.9 1524.2,748.6 1531.2,760.4 1533.6,774.5 1543.0,793.4 1533.6,800.4 1526.5,816.9 1521.8,839.9" fill="none" stroke="#585858" stroke-width="1.25" stroke-linejoin="round"/><polyline points="1695.9,802.8 1714.8,793.4 1734.1,788.6" fill="none" stroke="#585858" stroke-width="1.25" stroke-linejoin="round"/><polyline points="1783.4,511.0 1790.5,527.5 1785.8,551.0 1799.9,565.1 1814.0,574.5 1825.8,579.2 1837.5,588.6 1856.4,586.3 1865.8,591.0 1868.1,602.8 1877.5,609.8 1879.9,623.9 1894.0,619.2 1915.2,628.6 1929.3,626.3 1945.8,631.0 1959.9,642.8 1969.3,642.8 1978.7,631.0 1976.4,619.2 1999.9,609.8 2009.3,619.2 2028.1,619.2 2032.8,626.3 2045.1,631.0" fill="none" stroke="#585858" stroke-width="1.25" stroke-linejoin="round"/><polyline points="1894.0,619.2 1891.6,609.8 1896.4,600.4 1903.4,576.9 1912.8,569.8 1922.2,551.0 1919.9,534.5 1934.0,529.8 1945.8,525.1 1950.5,515.7 1945.8,511.0" fill="none" stroke="#585858" stroke-width="1.25" stroke-linejoin="round"/><polyline points="1934.0,529.8 1959.9,534.5 1983.4,551.0 2004.6,572.2 1997.5,591.0 1999.9,609.8" fill="none" stroke="#585858" stroke-width="1.25" stroke-linejoin="round"/><polyline points="1875.2,511.0 1889.3,520.4 1922.2,534.5" fill="none" stroke="#585858" stroke-width="1.25" stroke-linejoin="round"/><polyline points="1734.0,642.8 1748.1,633.4 1762.2,633.4 1766.9,647.5 1788.1,652.2 1797.5,659.2 1811.6,659.2 1816.4,666.3 1804.6,673.4 1809.3,680.4 1823.4,694.5 1835.2,689.8 1839.9,680.4 1835.2,673.4 1861.1,685.1 1872.8,682.8 1875.2,694.5 1870.5,696.9 1879.9,703.9 1886.9,701.6 1901.1,711.0 1912.8,711.0 1922.2,727.5 1926.9,736.9 1929.3,746.3 1941.1,741.6 1950.5,732.2 1955.2,743.9 1969.3,760.4 1976.4,755.7 1983.4,748.6 2004.6,746.3 2023.4,751.0 2039.9,743.9 2045.1,743.9" fill="none" stroke="#585858" stroke-width="1.25" stroke-linejoin="round"/><polyline points="1865.8,591.0 1856.4,605.1 1861.1,619.2 1858.7,633.4 1851.6,652.2 1844.6,671.0 1839.9,675.7" fill="none" stroke="#585858" stroke-width="1.25" stroke-linejoin="round"/><polyline points="1915.2,628.6 1915.2,642.8 1910.5,652.2 1910.5,663.9 1903.4,675.7 1903.4,685.1 1889.3,689.8 1886.9,701.6" fill="none" stroke="#585858" stroke-width="1.25" stroke-linejoin="round"/><polyline points="1969.3,642.8 1964.6,652.2 1974.0,661.6 1988.1,668.6 1992.8,678.1 2011.6,680.4 2030.5,675.7 2045.1,666.3" fill="none" stroke="#585858" stroke-width="1.25" stroke-linejoin="round"/><polyline points="2030.5,675.7 2030.5,699.2 2037.5,718.1 2042.2,743.9" fill="none" stroke="#585858" stroke-width="1.25" stroke-linejoin="round"/><polyline points="1945.8,689.8 1938.7,703.9 1945.8,722.8 1950.5,732.2" fill="none" stroke="#585858" stroke-width="1.25" stroke-linejoin="round"/><polyline points="1734.0,539.2 1738.7,553.4 1734.0,567.5" fill="none" stroke="#585858" stroke-width="1.25" stroke-linejoin="round"/><polyline points="1734.0,591.0 1748.1,600.4 1750.5,612.2 1741.1,642.8" fill="none" stroke="#585858" stroke-width="1.25" stroke-linejoin="round"/><polyline points="1734.0,666.3 1745.8,661.6 1755.2,668.6 1755.2,680.4 1764.6,689.8 1766.9,696.9 1774.0,706.3 1771.6,715.7" fill="none" stroke="#585858" stroke-width="1.25" stroke-linejoin="round"/><polyline points="1734.0,736.9 1745.8,732.2 1764.6,729.8 1811.6,732.2 1828.1,729.8 1832.8,736.9 1832.8,746.3 1844.6,755.7 1846.9,769.8 1863.4,783.9 1879.9,774.5 1894.0,753.4 1903.4,748.6 1912.8,739.2 1929.3,739.2" fill="none" stroke="#585858" stroke-width="1.25" stroke-linejoin="round"/><polyline points="1828.1,729.8 1828.1,703.9 1835.2,689.8" fill="none" stroke="#585858" stroke-width="1.25" stroke-linejoin="round"/><polyline points="1849.3,687.5 1846.9,713.4 1861.1,715.7 1872.8,729.8 1882.2,736.9 1903.4,746.3" fill="none" stroke="#585858" stroke-width="1.25" stroke-linejoin="round"/><polyline points="1811.6,732.2 1804.6,746.3 1804.6,765.1 1774.0,776.9 1757.5,774.5 1748.1,767.5 1745.8,751.0 1734.0,741.6" fill="none" stroke="#585858" stroke-width="1.25" stroke-linejoin="round"/><polyline points="1750.5,774.5 1781.1,781.6 1797.5,788.6 1821.1,791.0 1837.5,793.4 1837.5,805.1" fill="none" stroke="#585858" stroke-width="1.25" stroke-linejoin="round"/><polyline points="1837.5,793.4 1856.4,783.9 1870.5,781.6 1886.9,774.5 1901.1,753.4 1912.8,767.5 1915.2,783.9 1931.6,786.3 1957.5,781.6 1988.1,783.9 2011.6,776.9 2045.1,783.9" fill="none" stroke="#585858" stroke-width="1.25" stroke-linejoin="round"/><polyline points="2011.6,776.9 1992.8,779.2 1990.5,793.4 1995.2,809.8 2016.4,805.1 2045.1,802.8" fill="none" stroke="#585858" stroke-width="1.25" stroke-linejoin="round"/><polyline points="1837.5,805.1 1835.2,816.9 1844.6,839.9" fill="none" stroke="#585858" stroke-width="1.25" stroke-linejoin="round"/><polyline points="1856.4,800.4 1877.5,802.8 1886.9,795.7 1910.5,809.8 1926.9,821.6 1934.0,839.9" fill="none" stroke="#585858" stroke-width="1.25" stroke-linejoin="round"/><polyline points="1734.0,802.8 1748.1,800.4 1750.5,774.5" fill="none" stroke="#585858" stroke-width="1.25" stroke-linejoin="round"/><polyline points="1995.2,809.8 1981.1,823.9 1957.5,835.7 1945.8,839.9" fill="none" stroke="#585858" stroke-width="1.25" stroke-linejoin="round"/><polyline points="1206.1,840.0 1199.1,868.2 1194.4,887.1 1201.4,898.8 1203.8,910.6 1201.4,924.7 1182.6,934.1 1180.2,941.2 1168.5,948.2 1144.9,948.2 1128.5,952.9 1119.1,950.6 1112.0,941.2" fill="none" stroke="#585858" stroke-width="1.25" stroke-linejoin="round"/><polyline points="1201.4,924.7 1210.8,931.8 1229.6,929.4 1234.4,941.2 1246.1,948.2 1246.1,960.0 1243.8,964.7 1264.9,960.0 1276.7,960.0 1281.4,967.1 1290.8,943.5 1304.9,945.9 1312.0,957.6 1323.8,960.0 1342.6,950.6 1344.9,938.8 1359.1,917.6 1380.2,896.5 1387.3,877.6 1403.8,880.0 1408.5,870.6 1413.2,840.0" fill="none" stroke="#585858" stroke-width="1.25" stroke-linejoin="round"/><polyline points="1387.3,877.6 1384.9,863.5 1366.1,849.4 1349.6,847.1 1335.5,842.4 1323.8,854.1 1319.1,863.5 1307.3,865.9 1288.5,856.5 1281.4,842.4 1253.2,844.7 1239.1,840.0" fill="none" stroke="#585858" stroke-width="1.25" stroke-linejoin="round"/><polyline points="1168.5,948.2 1182.6,976.5 1175.5,992.9 1177.9,1016.5 1161.4,1035.3 1159.1,1044.7 1137.9,1042.4 1128.5,1051.8 1112.0,1068.2" fill="none" stroke="#585858" stroke-width="1.25" stroke-linejoin="round"/><polyline points="1159.1,1044.7 1166.1,1068.2 1189.6,1047.1 1201.4,1065.9 1210.8,1047.1 1220.2,1047.1 1229.6,1051.8 1241.4,1061.2 1250.8,1087.1 1276.7,1087.1 1286.1,1080.0 1293.2,1084.7 1286.1,1094.1 1309.6,1094.1 1321.4,1098.8 1314.4,1080.0 1321.4,1068.2 1333.2,1058.8 1354.4,1051.8 1349.6,1037.6 1366.1,1035.3 1392.0,1023.5 1384.9,1007.1 1375.5,992.9 1387.3,985.9 1410.8,978.8 1423.1,981.2" fill="none" stroke="#585858" stroke-width="1.25" stroke-linejoin="round"/><polyline points="1335.5,967.1 1347.3,960.0 1347.3,952.9 1359.1,948.2 1375.5,950.6 1377.9,969.4 1387.3,985.9" fill="none" stroke="#585858" stroke-width="1.25" stroke-linejoin="round"/><polyline points="1384.9,1007.1 1423.1,1004.7" fill="none" stroke="#585858" stroke-width="1.25" stroke-linejoin="round"/><polyline points="1366.1,1035.3 1373.2,1051.8 1384.9,1058.8 1380.2,1075.3 1382.6,1089.4 1399.1,1098.8 1415.5,1096.5 1423.1,1098.8" fill="none" stroke="#585858" stroke-width="1.25" stroke-linejoin="round"/><polyline points="1276.7,1087.1 1279.1,1096.5 1283.8,1108.2 1276.7,1115.3 1272.0,1129.4 1257.9,1141.2" fill="none" stroke="#585858" stroke-width="1.25" stroke-linejoin="round"/><polyline points="1415.5,1096.5 1406.1,1115.3" fill="none" stroke="#585858" stroke-width="1.25" stroke-linejoin="round"/><polyline points="1517.1,840.0 1526.5,856.5 1521.8,872.9 1528.9,891.8 1524.2,901.2 1503.0,891.8 1495.9,905.9 1517.1,915.3 1524.2,920.0 1540.6,912.9 1543.0,929.4 1540.6,941.2 1526.5,938.8 1524.2,950.6 1528.9,962.4 1519.5,955.3 1498.3,955.3 1493.6,945.9 1486.5,948.2 1474.8,978.8 1470.1,974.1 1460.6,971.8 1448.9,948.2 1432.4,962.4 1423.0,981.2" fill="none" stroke="#585858" stroke-width="1.25" stroke-linejoin="round"/><polyline points="1528.9,891.8 1540.6,875.3 1564.2,880.0 1568.9,884.7 1587.7,877.6 1620.6,870.6 1623.0,863.5 1639.5,865.9 1646.5,870.6 1658.3,877.6 1660.6,865.9 1653.6,849.4 1648.9,840.0" fill="none" stroke="#585858" stroke-width="1.25" stroke-linejoin="round"/><polyline points="1618.3,870.6 1641.8,880.0 1639.5,887.1 1615.9,891.8 1618.3,903.5 1592.4,910.6 1573.6,912.9 1566.5,927.1 1552.4,922.4 1543.0,929.4" fill="none" stroke="#585858" stroke-width="1.25" stroke-linejoin="round"/><polyline points="1618.3,903.5 1630.1,901.2 1644.2,903.5 1655.9,924.7 1644.2,934.1 1630.1,934.1 1618.3,912.9" fill="none" stroke="#585858" stroke-width="1.25" stroke-linejoin="round"/><polyline points="1630.1,934.1 1658.3,938.8 1688.9,943.5 1705.4,948.2 1734.1,945.9" fill="none" stroke="#585858" stroke-width="1.25" stroke-linejoin="round"/><polyline points="1644.2,903.5 1658.3,905.9 1672.4,901.2 1693.6,912.9 1703.0,901.2 1686.5,882.4 1684.2,870.6" fill="none" stroke="#585858" stroke-width="1.25" stroke-linejoin="round"/><polyline points="1693.6,912.9 1734.1,908.2" fill="none" stroke="#585858" stroke-width="1.25" stroke-linejoin="round"/><polyline points="1688.9,943.5 1677.1,960.0 1684.2,976.5 1684.2,990.6 1698.3,1002.4 1691.2,1009.4 1684.2,1014.1" fill="none" stroke="#585858" stroke-width="1.25" stroke-linejoin="round"/><polyline points="1540.6,941.2 1545.4,962.4 1543.0,983.5 1550.1,990.6 1559.5,988.2 1564.2,995.3 1571.2,997.6 1575.9,978.8 1587.7,976.5 1599.5,971.8 1611.2,964.7 1604.2,952.9 1615.9,934.1" fill="none" stroke="#585858" stroke-width="1.25" stroke-linejoin="round"/><polyline points="1559.5,988.2 1552.4,1000.0 1552.4,1018.8 1564.2,1030.6 1575.9,1037.6 1587.7,1047.1 1623.0,1044.7 1630.1,1054.1" fill="none" stroke="#585858" stroke-width="1.25" stroke-linejoin="round"/><polyline points="1587.7,1047.1 1545.4,1047.1 1524.2,1040.0 1517.1,1035.3 1500.6,1035.3 1491.2,1040.0 1486.5,1061.2 1477.1,1054.1 1453.6,1028.2 1455.9,1014.1 1474.8,992.9 1470.1,974.1" fill="none" stroke="#585858" stroke-width="1.25" stroke-linejoin="round"/><polyline points="1423.0,1098.8 1432.4,1096.5 1437.1,1084.7 1446.5,1075.3" fill="none" stroke="#585858" stroke-width="1.25" stroke-linejoin="round"/><polyline points="1498.3,1084.7 1512.4,1077.6 1521.8,1089.4 1545.4,1094.1 1564.2,1098.8 1583.0,1094.1 1594.8,1098.8 1597.1,1108.2 1611.2,1117.6 1623.0,1122.4 1618.3,1134.1 1613.6,1150.6 1608.9,1168.9" fill="none" stroke="#585858" stroke-width="1.25" stroke-linejoin="round"/><polyline points="1623.0,1122.4 1639.5,1136.5 1648.9,1150.6 1653.6,1168.9" fill="none" stroke="#585858" stroke-width="1.25" stroke-linejoin="round"/><polyline points="1644.2,934.1 1630.1,952.9 1627.7,971.8 1639.5,985.9 1658.3,992.9" fill="none" stroke="#585858" stroke-width="1.25" stroke-linejoin="round"/><polyline points="1734.0,847.1 1743.4,863.5 1766.9,856.5 1781.1,863.5 1790.5,875.3 1802.2,882.4 1795.2,887.1 1802.2,920.0 1795.2,934.1 1769.3,936.5 1748.1,934.1 1734.0,945.9" fill="none" stroke="#585858" stroke-width="1.25" stroke-linejoin="round"/><polyline points="1802.2,920.0 1811.6,927.1 1814.0,938.8 1823.4,948.2 1832.8,955.3 1846.9,964.7 1856.4,981.2 1870.5,983.5 1879.9,992.9 1908.1,992.9 1917.5,983.5 1926.9,983.5 1936.4,976.5 1945.8,976.5 1959.9,967.1 1969.3,969.4 1992.8,967.1 2011.6,962.4 2032.8,948.2 2037.5,934.1 2045.1,929.4" fill="none" stroke="#585858" stroke-width="1.25" stroke-linejoin="round"/><polyline points="1811.6,927.1 1811.6,865.9 1821.1,861.2 1844.6,863.5 1842.2,851.8 1849.3,840.0" fill="none" stroke="#585858" stroke-width="1.25" stroke-linejoin="round"/><polyline points="1875.2,840.0 1879.9,851.8 1875.2,861.2 1922.2,858.8 1924.6,840.0" fill="none" stroke="#585858" stroke-width="1.25" stroke-linejoin="round"/><polyline points="1795.2,934.1 1804.6,948.2 1788.1,962.4 1778.7,967.1 1781.1,976.5 1781.1,985.9 1762.2,995.3 1764.6,1004.7 1759.9,1014.1 1748.1,1011.8 1734.0,1004.7" fill="none" stroke="#585858" stroke-width="1.25" stroke-linejoin="round"/><polyline points="1748.1,934.1 1750.5,920.0 1741.1,908.2 1734.0,910.6" fill="none" stroke="#585858" stroke-width="1.25" stroke-linejoin="round"/><polyline points="1783.4,1030.6 1795.2,1028.2 1809.3,1042.4 1837.5,1025.9 1856.4,1032.9 1879.9,1040.0 1898.7,1035.3 1917.5,1037.6 1922.2,1051.8 1934.0,1049.4 1948.1,1051.8 1938.7,1075.3 1936.4,1087.1 1948.1,1094.1 1959.9,1103.5 1943.4,1108.2 1955.2,1127.1 1943.4,1138.8 1929.3,1138.8 1936.4,1150.6 1922.2,1150.6 1910.5,1168.9" fill="none" stroke="#585858" stroke-width="1.25" stroke-linejoin="round"/><polyline points="1783.4,1030.6 1783.4,1054.1 1795.2,1061.2 1795.2,1072.9 1804.6,1084.7 1811.6,1103.5 1825.8,1117.6 1846.9,1136.5 1856.4,1150.6 1865.8,1168.9" fill="none" stroke="#585858" stroke-width="1.25" stroke-linejoin="round"/><polyline points="1926.9,983.5 1929.3,1004.7 1934.0,1018.8 1950.5,1028.2 1938.7,1030.6 1936.4,1049.4" fill="none" stroke="#585858" stroke-width="1.25" stroke-linejoin="round"/><polyline points="1990.5,969.4 1999.9,981.2 2014.0,992.9 2016.4,1014.1 2025.8,1021.2 2045.1,1028.2" fill="none" stroke="#585858" stroke-width="1.25" stroke-linejoin="round"/><polyline points="1943.4,1138.8 1969.3,1145.9 1981.1,1168.9" fill="none" stroke="#585858" stroke-width="1.25" stroke-linejoin="round"/></svg>
<div class="a" style="left:361.0px;top:57.1px;font-size:24px;line-height:24px;color:#bdbdbd;white-space:nowrap;font-weight:bold;transform-origin:0 0;transform:scaleX(0.974);text-shadow:0 0 2px #171717,0 0 2px #171717,0 0 1px #171717">Denmark</div>
<div class="a" style="left:471.6px;top:64.5px;font-size:19.5px;line-height:19.5px;color:#cfcfcf;white-space:nowrap;transform-origin:0 0;transform:scaleX(0.976);text-shadow:0 0 2px #171717,0 0 2px #171717,0 0 1px #171717">Copenhagen</div>
<div class="a" style="left:400.0px;top:174.5px;font-size:19.5px;line-height:19.5px;color:#cfcfcf;white-space:nowrap;transform-origin:0 0;transform:scaleX(0.923);text-shadow:0 0 2px #171717,0 0 2px #171717,0 0 1px #171717">Kiel</div>
<div class="a" style="left:842.8px;top:145.3px;font-size:19.5px;line-height:19.5px;color:#cfcfcf;white-space:nowrap;transform-origin:0 0;transform:scaleX(0.974);text-shadow:0 0 2px #171717,0 0 2px #171717,0 0 1px #171717">Kaliningrad</div>
<div class="a" style="left:774.9px;top:174.5px;font-size:19.5px;line-height:19.5px;color:#cfcfcf;white-space:nowrap;transform-origin:0 0;transform:scaleX(0.872);text-shadow:0 0 2px #171717,0 0 2px #171717,0 0 1px #171717">Gdansk</div>
<div class="a" style="left:368.0px;top:235.5px;font-size:19.5px;line-height:19.5px;color:#cfcfcf;white-space:nowrap;transform-origin:0 0;transform:scaleX(1.010);text-shadow:0 0 2px #171717,0 0 2px #171717,0 0 1px #171717">Hamburg</div>
<div class="a" style="left:321.7px;top:271.9px;font-size:19.5px;line-height:19.5px;color:#cfcfcf;white-space:nowrap;transform-origin:0 0;transform:scaleX(0.952);text-shadow:0 0 2px #171717,0 0 2px #171717,0 0 1px #171717">Bremen</div>
<div class="a" style="left:581.7px;top:245.5px;font-size:19.5px;line-height:19.5px;color:#cfcfcf;white-space:nowrap;transform-origin:0 0;transform:scaleX(0.888);text-shadow:0 0 2px #171717,0 0 2px #171717,0 0 1px #171717">Szczecin</div>
<div class="a" style="left:732.7px;top:269.5px;font-size:19.5px;line-height:19.5px;color:#cfcfcf;white-space:nowrap;transform-origin:0 0;transform:scaleX(0.880);text-shadow:0 0 2px #171717,0 0 2px #171717,0 0 1px #171717">Bydgoszcz</div>
<div class="a" style="left:500.0px;top:313.5px;font-size:21px;line-height:21px;color:#cfcfcf;white-space:nowrap;font-weight:bold;transform-origin:0 0;transform:scaleX(0.975);text-shadow:0 0 2px #171717,0 0 2px #171717,0 0 1px #171717">Berlin</div>
<div class="a" style="left:364.6px;top:324.5px;font-size:19.5px;line-height:19.5px;color:#cfcfcf;white-space:nowrap;transform-origin:0 0;transform:scaleX(0.882);text-shadow:0 0 2px #171717,0 0 2px #171717,0 0 1px #171717">Hanover</div>
<div class="a" style="left:184.7px;top:326.5px;font-size:19.5px;line-height:19.5px;color:#cfcfcf;white-space:nowrap;transform-origin:0 0;transform:scaleX(1.026);text-shadow:0 0 2px #171717,0 0 2px #171717,0 0 1px #171717">Amsterdam</div>
<div class="a" style="left:696.9px;top:322.0px;font-size:19.5px;line-height:19.5px;color:#cfcfcf;white-space:nowrap;transform-origin:0 0;transform:scaleX(0.877);text-shadow:0 0 2px #171717,0 0 2px #171717,0 0 1px #171717">Poznań</div>
<div class="a" style="left:796.3px;top:356.1px;font-size:24px;line-height:24px;color:#bdbdbd;white-space:nowrap;font-weight:bold;transform-origin:0 0;transform:scaleX(0.938);text-shadow:0 0 2px #171717,0 0 2px #171717,0 0 1px #171717">Poland</div>
<div class="a" style="left:151.8px;top:369.6px;font-size:20.5px;line-height:20.5px;color:#bababa;white-space:nowrap;font-weight:bold;transform-origin:0 0;transform:scaleX(0.966);text-shadow:0 0 2px #171717,0 0 2px #171717,0 0 1px #171717">Netherlands</div>
<div class="a" style="left:214.4px;top:408.9px;font-size:19.5px;line-height:19.5px;color:#cfcfcf;white-space:nowrap;transform-origin:0 0;transform:scaleX(1.025);text-shadow:0 0 2px #171717,0 0 2px #171717,0 0 1px #171717">Dusseldorf</div>
<div class="a" style="left:361.0px;top:429.1px;font-size:24px;line-height:24px;color:#bdbdbd;white-space:nowrap;font-weight:bold;transform-origin:0 0;transform:scaleX(0.946);text-shadow:0 0 2px #171717,0 0 2px #171717,0 0 1px #171717">Germany</div>
<div class="a" style="left:546.0px;top:422.5px;font-size:19.5px;line-height:19.5px;color:#cfcfcf;white-space:nowrap;transform-origin:0 0;transform:scaleX(0.906);text-shadow:0 0 2px #171717,0 0 2px #171717,0 0 1px #171717">Dresden</div>
<div class="a" style="left:695.0px;top:418.5px;font-size:19.5px;line-height:19.5px;color:#cfcfcf;white-space:nowrap;transform-origin:0 0;transform:scaleX(0.938);text-shadow:0 0 2px #171717,0 0 2px #171717,0 0 1px #171717">Wrocław</div>
<div class="a" style="left:112.4px;top:435.0px;font-size:19.5px;line-height:19.5px;color:#cfcfcf;white-space:nowrap;transform-origin:0 0;transform:scaleX(1.038);text-shadow:0 0 2px #171717,0 0 2px #171717,0 0 1px #171717">Brussels</div>
<div class="a" style="left:125.7px;top:480.6px;font-size:20.5px;line-height:20.5px;color:#bababa;white-space:nowrap;font-weight:bold;transform-origin:0 0;transform:scaleX(0.942);text-shadow:0 0 2px #171717,0 0 2px #171717,0 0 1px #171717">Belgium</div>
<div class="a" style="left:829.6px;top:493.5px;font-size:19.5px;line-height:19.5px;color:#cfcfcf;white-space:nowrap;transform-origin:0 0;transform:scaleX(1.021);text-shadow:0 0 2px #171717,0 0 2px #171717,0 0 1px #171717">Krakow</div>
<div class="a" style="left:357.2px;top:519.1px;font-size:19.5px;line-height:19.5px;color:#cfcfcf;white-space:nowrap;transform-origin:0 0;transform:scaleX(1.061);text-shadow:0 0 2px #171717,0 0 2px #171717,0 0 1px #171717">Frankfurt</div>
<div class="a" style="left:177.8px;top:530.1px;font-size:19.5px;line-height:19.5px;color:#cfcfcf;white-space:nowrap;transform-origin:0 0;transform:scaleX(0.966);text-shadow:0 0 2px #171717,0 0 2px #171717,0 0 1px #171717">Luxembourg</div>
<div class="a" style="left:616.6px;top:532.6px;font-size:20.5px;line-height:20.5px;color:#bababa;white-space:nowrap;font-weight:bold;transform-origin:0 0;transform:scaleX(0.929);text-shadow:0 0 2px #171717,0 0 2px #171717,0 0 1px #171717">Czechia</div>
<div class="a" style="left:336.4px;top:583.7px;font-size:19.5px;line-height:19.5px;color:#cfcfcf;white-space:nowrap;transform-origin:0 0;transform:scaleX(0.950);text-shadow:0 0 2px #171717,0 0 2px #171717,0 0 1px #171717">Stuttgart</div>
<div class="a" style="left:69.0px;top:578.9px;font-size:19.5px;line-height:19.5px;color:#cfcfcf;white-space:nowrap;transform-origin:0 0;transform:scaleX(1.044);text-shadow:0 0 2px #171717,0 0 2px #171717,0 0 1px #171717">Paris</div>
<div class="a" style="left:807.4px;top:603.6px;font-size:20.5px;line-height:20.5px;color:#bababa;white-space:nowrap;font-weight:bold;transform-origin:0 0;transform:scaleX(0.837);text-shadow:0 0 2px #171717,0 0 2px #171717,0 0 1px #171717">Slovakia</div>
<div class="a" style="left:449.5px;top:626.5px;font-size:19.5px;line-height:19.5px;color:#cfcfcf;white-space:nowrap;transform-origin:0 0;transform:scaleX(0.986);text-shadow:0 0 2px #171717,0 0 2px #171717,0 0 1px #171717">Munich</div>
<div class="a" style="left:632.0px;top:625.5px;font-size:19.5px;line-height:19.5px;color:#cfcfcf;white-space:nowrap;transform-origin:0 0;transform:scaleX(0.977);text-shadow:0 0 2px #171717,0 0 2px #171717,0 0 1px #171717">Vienna</div>
<div class="a" style="left:34.5px;top:662.7px;font-size:24px;line-height:24px;color:#bdbdbd;white-space:nowrap;font-weight:bold;transform-origin:0 0;transform:scaleX(0.963);text-shadow:0 0 2px #171717,0 0 2px #171717,0 0 1px #171717">France</div>
<div class="a" style="left:162.0px;top:684.0px;font-size:19.5px;line-height:19.5px;color:#cfcfcf;white-space:nowrap;transform-origin:0 0;transform:scaleX(0.923);text-shadow:0 0 2px #171717,0 0 2px #171717,0 0 1px #171717">Dijon</div>
<div class="a" style="left:350.0px;top:681.5px;font-size:19.5px;line-height:19.5px;color:#cfcfcf;white-space:nowrap;transform-origin:0 0;transform:scaleX(1.028);text-shadow:0 0 2px #171717,0 0 2px #171717,0 0 1px #171717">Zurich</div>
<div class="a" style="left:571.0px;top:680.2px;font-size:20.5px;line-height:20.5px;color:#bababa;white-space:nowrap;font-weight:bold;transform-origin:0 0;transform:scaleX(0.960);text-shadow:0 0 2px #171717,0 0 2px #171717,0 0 1px #171717">Austria</div>
<div class="a" style="left:796.3px;top:716.3px;font-size:24px;line-height:24px;color:#bdbdbd;white-space:nowrap;font-weight:bold;transform-origin:0 0;transform:scaleX(0.957);text-shadow:0 0 2px #171717,0 0 2px #171717,0 0 1px #171717">Hungary</div>
<div class="a" style="left:272.3px;top:733.4px;font-size:20.5px;line-height:20.5px;color:#bababa;white-space:nowrap;font-weight:bold;transform-origin:0 0;transform:scaleX(0.970);text-shadow:0 0 2px #171717,0 0 2px #171717,0 0 1px #171717">Switzerland</div>
<div class="a" style="left:433.8px;top:767.1px;font-size:19.5px;line-height:19.5px;color:#cfcfcf;white-space:nowrap;transform-origin:0 0;transform:scaleX(0.953);text-shadow:0 0 2px #171717,0 0 2px #171717,0 0 1px #171717">Trento</div>
<div class="a" style="left:587.8px;top:775.6px;font-size:20.5px;line-height:20.5px;color:#bababa;white-space:nowrap;font-weight:bold;transform-origin:0 0;transform:scaleX(0.830);text-shadow:0 0 2px #171717,0 0 2px #171717,0 0 1px #171717">Slovenia</div>
<div class="a" style="left:154.0px;top:787.9px;font-size:19.5px;line-height:19.5px;color:#cfcfcf;white-space:nowrap;transform-origin:0 0;transform:scaleX(0.898);text-shadow:0 0 2px #171717,0 0 2px #171717,0 0 1px #171717">Lyon</div>
<div class="a" style="left:348.0px;top:805.0px;font-size:19.5px;line-height:19.5px;color:#cfcfcf;white-space:nowrap;transform-origin:0 0;transform:scaleX(1.019);text-shadow:0 0 2px #171717,0 0 2px #171717,0 0 1px #171717">Milan</div>
<div class="a" style="left:680.0px;top:808.6px;font-size:20.5px;line-height:20.5px;color:#bababa;white-space:nowrap;font-weight:bold;transform-origin:0 0;transform:scaleX(0.956);text-shadow:0 0 2px #171717,0 0 2px #171717,0 0 1px #171717">Croatia</div>
<div class="a" style="left:280.6px;top:831.5px;font-size:19.5px;line-height:19.5px;color:#cfcfcf;white-space:nowrap;transform-origin:0 0;transform:scaleX(1.043);text-shadow:0 0 2px #171717,0 0 2px #171717,0 0 1px #171717">Turin</div>
<div class="a" style="left:846.0px;top:846.5px;font-size:19.5px;line-height:19.5px;color:#cfcfcf;white-space:nowrap;transform-origin:0 0;transform:scaleX(1.038);text-shadow:0 0 2px #171717,0 0 2px #171717,0 0 1px #171717">Belgrade</div>
<div class="a" style="left:335.3px;top:874.7px;font-size:19.5px;line-height:19.5px;color:#cfcfcf;white-space:nowrap;transform-origin:0 0;transform:scaleX(0.842);text-shadow:0 0 2px #171717,0 0 2px #171717,0 0 1px #171717">Genoa</div>
<div class="a" style="left:475.0px;top:881.2px;font-size:19.5px;line-height:19.5px;color:#cfcfcf;white-space:nowrap;transform-origin:0 0;transform:scaleX(0.950);text-shadow:0 0 2px #171717,0 0 2px #171717,0 0 1px #171717">City of San</div>
<div class="a" style="left:490.0px;top:902.9px;font-size:19.5px;line-height:19.5px;color:#cfcfcf;white-space:nowrap;transform-origin:0 0;transform:scaleX(1.030);text-shadow:0 0 2px #171717,0 0 2px #171717,0 0 1px #171717">Marino</div>
<div class="a" style="left:720.0px;top:894.6px;font-size:20.5px;line-height:20.5px;color:#bababa;white-space:nowrap;font-weight:bold;transform-origin:0 0;transform:scaleX(0.803);text-shadow:0 0 2px #171717,0 0 2px #171717,0 0 1px #171717">Bosnia and</div>
<div class="a" style="left:714.0px;top:916.6px;font-size:20.5px;line-height:20.5px;color:#bababa;white-space:nowrap;font-weight:bold;transform-origin:0 0;transform:scaleX(0.832);text-shadow:0 0 2px #171717,0 0 2px #171717,0 0 1px #171717">Herzegovina</div>
<div class="a" style="left:871.7px;top:902.0px;font-size:20.5px;line-height:20.5px;color:#bababa;white-space:nowrap;font-weight:bold;transform-origin:0 0;transform:scaleX(0.957);text-shadow:0 0 2px #171717,0 0 2px #171717,0 0 1px #171717">Serbia</div>
<div class="a" style="left:-24.2px;top:926.5px;font-size:19.5px;line-height:19.5px;color:#cfcfcf;white-space:nowrap;transform-origin:0 0;transform:scaleX(1.006);text-shadow:0 0 2px #171717,0 0 2px #171717,0 0 1px #171717">Toulouse</div>
<div class="a" style="left:107.4px;top:973.5px;font-size:19.5px;line-height:19.5px;color:#cfcfcf;white-space:nowrap;transform-origin:0 0;transform:scaleX(1.038);text-shadow:0 0 2px #171717,0 0 2px #171717,0 0 1px #171717">Marseille</div>
<div class="a" style="left:502.0px;top:-14.0px;font-size:19.5px;line-height:19.5px;color:#cfcfcf;white-space:nowrap;transform-origin:0 0;transform:scaleX(0.923);text-shadow:0 0 2px #171717,0 0 2px #171717,0 0 1px #171717">Halmstad</div>
<div class="a" style="left:1171.5px;top:192.9px;font-size:22.00px;line-height:22.00px;color:#858585;white-space:nowrap;letter-spacing:4.25px;font-style:italic;margin-left:-1112px;margin-top:-182px;">North</div>
<div class="a" style="left:1184.4px;top:224.0px;font-size:22.00px;line-height:22.00px;color:#858585;white-space:nowrap;letter-spacing:2.23px;font-style:italic;margin-left:-1112px;margin-top:-182px;">Sea</div>
<div class="a" style="left:819px;top:31px;font-size:30px;line-height:30px;color:#6a6a6a;letter-spacing:9px;white-space:nowrap;transform-origin:0 100%;transform:rotate(-40deg)">Ba</div>
<div class="a" style="left:623px;top:956px;font-size:22px;line-height:22px;color:#4c4c4c;letter-spacing:7px;white-space:nowrap;transform-origin:0 0;transform:rotate(35deg)">Adri</div>
<svg width="1" height="1" style="left:-1112px;top:-182px"><circle cx="1526.7" cy="382" r="3.6" fill="#d4d4d4" stroke="#1c1c1c" stroke-width="1.4"/><circle cx="1520.6" cy="441.8" r="3.6" fill="#d4d4d4" stroke="#1c1c1c" stroke-width="1.4"/><circle cx="1465.9" cy="477.9" r="3.6" fill="#d4d4d4" stroke="#1c1c1c" stroke-width="1.4"/><circle cx="1508.8" cy="531.2" r="3.6" fill="#d4d4d4" stroke="#1c1c1c" stroke-width="1.4"/><circle cx="1373.6" cy="616.3" r="3.6" fill="#d4d4d4" stroke="#1c1c1c" stroke-width="1.4"/><circle cx="2001" cy="352" r="3.6" fill="#d4d4d4" stroke="#1c1c1c" stroke-width="1.4"/><circle cx="1915.5" cy="380.3" r="3.6" fill="#d4d4d4" stroke="#1c1c1c" stroke-width="1.4"/><circle cx="1728.4" cy="451" r="3.6" fill="#d4d4d4" stroke="#1c1c1c" stroke-width="1.4"/><circle cx="1885.8" cy="475" r="3.6" fill="#d4d4d4" stroke="#1c1c1c" stroke-width="1.4"/><circle cx="1836.8" cy="528.7" r="3.6" fill="#d4d4d4" stroke="#1c1c1c" stroke-width="1.4"/><circle cx="1691.6" cy="628.8" r="3.6" fill="#d4d4d4" stroke="#1c1c1c" stroke-width="1.4"/><circle cx="1842" cy="624.6" r="3.6" fill="#d4d4d4" stroke="#1c1c1c" stroke-width="1.4"/><circle cx="1974" cy="700.8" r="3.6" fill="#d4d4d4" stroke="#1c1c1c" stroke-width="1.4"/><circle cx="1482.7" cy="790.2" r="3.6" fill="#d4d4d4" stroke="#1c1c1c" stroke-width="1.4"/><circle cx="1592.4" cy="834.4" r="3.6" fill="#d4d4d4" stroke="#1c1c1c" stroke-width="1.4"/><circle cx="1294.2" cy="889.8" r="3.6" fill="#d4d4d4" stroke="#1c1c1c" stroke-width="1.4"/><circle cx="1453.5" cy="886" r="3.6" fill="#d4d4d4" stroke="#1c1c1c" stroke-width="1.4"/><circle cx="1571.7" cy="973" r="3.6" fill="#d4d4d4" stroke="#1c1c1c" stroke-width="1.4"/><circle cx="1285" cy="993.7" r="3.6" fill="#d4d4d4" stroke="#1c1c1c" stroke-width="1.4"/><circle cx="1483.5" cy="1012.7" r="3.6" fill="#d4d4d4" stroke="#1c1c1c" stroke-width="1.4"/><circle cx="1414.9" cy="1038.6" r="3.6" fill="#d4d4d4" stroke="#1c1c1c" stroke-width="1.4"/><circle cx="1471" cy="1081.2" r="3.6" fill="#d4d4d4" stroke="#1c1c1c" stroke-width="1.4"/><circle cx="1130" cy="1132.3" r="3.6" fill="#d4d4d4" stroke="#1c1c1c" stroke-width="1.4"/><circle cx="1308.8" cy="1151.6" r="3.6" fill="#d4d4d4" stroke="#1c1c1c" stroke-width="1.4"/><circle cx="1651.5" cy="192.5" r="3.6" fill="#d4d4d4" stroke="#1c1c1c" stroke-width="1.4"/><circle cx="1637.2" cy="273.7" r="5.6" fill="#1c1c1c" stroke="#d4d4d4" stroke-width="1.6"/><circle cx="1637.2" cy="273.7" r="2.3" fill="#d4d4d4"/><circle cx="1287" cy="531.2" r="5.6" fill="#1c1c1c" stroke="#d4d4d4" stroke-width="1.6"/><circle cx="1287" cy="531.2" r="2.3" fill="#d4d4d4"/><circle cx="1262.7" cy="643.9" r="5.6" fill="#1c1c1c" stroke="#d4d4d4" stroke-width="1.6"/><circle cx="1262.7" cy="643.9" r="2.3" fill="#d4d4d4"/><circle cx="1171.3" cy="784.7" r="5.6" fill="#1c1c1c" stroke="#d4d4d4" stroke-width="1.6"/><circle cx="1171.3" cy="784.7" r="2.3" fill="#d4d4d4"/><circle cx="1811.6" cy="829.5" r="5.6" fill="#1c1c1c" stroke="#d4d4d4" stroke-width="1.6"/><circle cx="1811.6" cy="829.5" r="2.3" fill="#d4d4d4"/><circle cx="1998" cy="1054.9" r="5.6" fill="#1c1c1c" stroke="#d4d4d4" stroke-width="1.6"/><circle cx="1998" cy="1054.9" r="2.3" fill="#d4d4d4"/><circle cx="1632.4" cy="1111" r="5.6" fill="#1c1c1c" stroke="#d4d4d4" stroke-width="1.6"/><circle cx="1632.4" cy="1111" r="2.3" fill="#d4d4d4"/><circle cx="1677.3" cy="522.3" r="25.7" fill="#2ecc7e"/><circle cx="1677.3" cy="522.3" r="12.9" fill="#dccdf2"/><circle cx="1453.3" cy="440" r="12.6" fill="#1414b0"/><circle cx="1247" cy="562" r="13" fill="#e6e6e6"/><circle cx="1258.4" cy="611.7" r="12.6" fill="#1414b0"/><circle cx="1630.8" cy="604.5" r="13" fill="#f0d264"/><circle cx="1454.6" cy="702.7" r="13" fill="#2b2fe0"/><circle cx="1353.6" cy="730.4" r="13" fill="#2b2fe0"/><circle cx="1372.6" cy="718.4" r="12.8" fill="#2f8f48"/><circle cx="1347.8" cy="730.4" r="13" fill="#f0d264"/><circle cx="1419.3" cy="743" r="13" fill="#2b2fe0"/><circle cx="1428" cy="740.2" r="13" fill="#98e884"/><circle cx="1458.3" cy="734.8" r="13" fill="#4aa8e8"/><circle cx="1452.8" cy="736.6" r="13" fill="#b488d8"/><circle cx="1452" cy="745.7" r="13" fill="#ee6a2e"/><circle cx="1392.6" cy="764" r="13" fill="#f0d264"/><circle cx="1593.8" cy="1004.7" r="13" fill="#48a8e6"/><ellipse cx="2009.5" cy="1141" rx="19" ry="18" fill="#8a8a8a"/><circle cx="2009.5" cy="1137" r="18.5" fill="#fafafa"/></svg>
<div class="a" style="left:831.9000000000001px;top:9px;width:44.5px;height:37.5px;background:rgba(205,205,205,0.88);border-radius:3px"></div>
<div class="a" style="left:883px;top:9px;width:41.5px;height:37.5px;background:rgba(205,205,205,0.88);border-radius:3px"></div>
<svg width="1" height="1" style="left:-1112px;top:-182px" fill="none" stroke="#5e5e5e" stroke-width="2">
<path d="M1961.4,199.5 V205.8 H1955.8 M1970.3,199.5 V205.8 H1976 M1961.4,219.5 V213.6 H1955.8 M1970.3,219.5 V213.6 H1976"/>
<path d="M2008,203.6 H2024.3 M2008,209.6 H2024.3 M2008,215.5 H2024.3" stroke-width="2.6" stroke-linecap="round"/>
</svg>
</div>
<div class="a" style="left:1136.3px;top:1189.7px;font-size:21.60px;line-height:21.60px;color:#666;white-space:nowrap;letter-spacing:0.28px;">No further context information available for current selection:</div>
<div class="a" style="left:1136.3px;top:1215.5px;width:139.5px;height:33px;background:#fafafa;border:1px solid #e3e3e3;border-radius:3px;box-sizing:border-box"></div>
<div class="a" style="left:1284.8px;top:1215.5px;width:331.6px;height:33px;background:#fafafa;border:1px solid #e3e3e3;border-radius:3px;box-sizing:border-box"></div>
<div class="a" style="left:1148.8px;top:1223.3px;font-size:20.00px;line-height:20.00px;color:#666;white-space:nowrap;letter-spacing:-0.55px;">ASSET_ID | <span style="color:#3fa0e6">3</span></div>
<div class="a" style="left:1297.0px;top:1223.3px;font-size:20.00px;line-height:20.00px;color:#666;white-space:nowrap;letter-spacing:-0.10px;">ACTION_ID | <span style="color:#3fa0e6">GAAAAAAhgwAAAA</span></div>
<div class="card" style="left:2086px;top:90.5px;width:448px;height:1286.5px;overflow:hidden">
<div class="a" style="left:0;top:90px;width:448px;height:1px;background:#efefef"></div>
<div class="a" style="left:0;top:183px;width:448px;height:926.5px;background:#fafafa"></div>
<div class="a" style="left:0;top:1186.5px;width:448px;height:100px;background:#fafafa"></div>
</div>
<div class="a" style="left:2125.7px;top:123.5px;font-size:25.60px;line-height:25.60px;color:#1f1f1f;white-space:nowrap;letter-spacing:-0.09px;-webkit-text-stroke:0.35px #1f1f1f;">Explore further</div>
<div class="a" style="left:2125.7px;top:224.6px;font-size:22.20px;line-height:22.20px;color:#595959;white-space:nowrap;letter-spacing:-0.49px;">Followups</div>
<div class="a" style="left:2125.6px;top:1228.2px;font-size:22.20px;line-height:22.20px;color:#595959;white-space:nowrap;letter-spacing:-0.38px;">Also about Resources</div>
<svg width="1" height="1" style="left:0;top:0"><polyline points="2492.8,238.8 2498.7,232.8 2504.6,238.8" fill="none" stroke="#444" stroke-width="2.3" stroke-linecap="round" stroke-linejoin="round"/></svg>
<svg width="1" height="1" style="left:0;top:0"><polyline points="2492.8,1242.6 2498.7,1236.3 2504.6,1242.6" fill="none" stroke="#444" stroke-width="2.3" stroke-linecap="round" stroke-linejoin="round"/></svg>
<div class="a" style="left:2203.3px;top:302.4px;font-size:21.75px;line-height:21.75px;color:#595959;white-space:nowrap;letter-spacing:-0.00px;">Data associated with actio...</div>
<svg width="1" height="1" style="left:0;top:0" fill="none" stroke="#555" stroke-width="1.7"><path d="M2510,308.8 V305.8 H2494 V322.40000000000003 H2510 V319.40000000000003"/><path d="M2500.3,314.1 H2509.5"/><path d="M2506.5,311.1 L2510,314.1 L2506.5,317.1" stroke-width="1.6"/></svg>
<svg width="1" height="1" style="left:0;top:0"><path fill-rule="evenodd" fill="#505050" d="M2177.15,310.65 L2179.50,310.70 L2179.50,313.30 L2177.15,313.35 L2176.31,315.40 L2177.93,317.10 L2176.10,318.93 L2174.40,317.31 L2172.35,318.15 L2172.30,320.50 L2169.70,320.50 L2169.65,318.15 L2167.60,317.31 L2165.90,318.93 L2164.07,317.10 L2165.69,315.40 L2164.85,313.35 L2162.50,313.30 L2162.50,310.70 L2164.85,310.65 L2165.69,308.60 L2164.07,306.90 L2165.90,305.07 L2167.60,306.69 L2169.65,305.85 L2169.70,303.50 L2172.30,303.50 L2172.35,305.85 L2174.40,306.69 L2176.10,305.07 L2177.93,306.90 L2176.31,308.60 Z M2173.6,312.0 A2.6,2.6 0 1 0 2168.4,312.0 A2.6,2.6 0 1 0 2173.6,312.0 Z M2184.87,304.29 L2186.11,304.32 L2186.11,306.08 L2184.87,306.11 L2184.12,307.40 L2184.72,308.49 L2183.19,309.37 L2182.55,308.31 L2181.05,308.31 L2180.41,309.37 L2178.88,308.49 L2179.48,307.40 L2178.73,306.11 L2177.49,306.08 L2177.49,304.32 L2178.73,304.29 L2179.48,303.00 L2178.88,301.91 L2180.41,301.03 L2181.05,302.09 L2182.55,302.09 L2183.19,301.03 L2184.72,301.91 L2184.12,303.00 Z M2183.1000000000004,305.2 A1.3,1.3 0 1 0 2180.5,305.2 A1.3,1.3 0 1 0 2183.1000000000004,305.2 Z M2184.87,317.69 L2186.11,317.72 L2186.11,319.48 L2184.87,319.51 L2184.12,320.80 L2184.72,321.89 L2183.19,322.77 L2182.55,321.71 L2181.05,321.71 L2180.41,322.77 L2178.88,321.89 L2179.48,320.80 L2178.73,319.51 L2177.49,319.48 L2177.49,317.72 L2178.73,317.69 L2179.48,316.40 L2178.88,315.31 L2180.41,314.43 L2181.05,315.49 L2182.55,315.49 L2183.19,314.43 L2184.72,315.31 L2184.12,316.40 Z M2183.1000000000004,318.6 A1.3,1.3 0 1 0 2180.5,318.6 A1.3,1.3 0 1 0 2183.1000000000004,318.6 Z"/></svg>
<div class="a" style="left:2207.5px;top:379.6px;font-size:21.75px;line-height:21.75px;color:#595959;white-space:nowrap;letter-spacing:-0.00px;">Details of asset 3</div>
<svg width="1" height="1" style="left:0;top:0" fill="none" stroke="#555" stroke-width="1.7"><path d="M2510,386.0 V383.0 H2494 V399.6 H2510 V396.6"/><path d="M2500.3,391.3 H2509.5"/><path d="M2506.5,388.3 L2510,391.3 L2506.5,394.3" stroke-width="1.6"/></svg>
<svg width="1" height="1" style="left:2163.5px;top:379.7px"><g transform="scale(0.73)"><path d="M17.5,0.8000000000000014 L26.1,5.200000000000001 L26.1,14.4 L17.5,19.0 L8.9,14.4 L8.9,5.200000000000001 Z" fill="#505050"/><path d="M17.5,3.2000000000000015 L22.900000000000002,5.200000000000001 L17.5,9.3 L12.100000000000001,5.200000000000001 Z" fill="#fff"/><path d="M19.5,11.0 L24.1,8.600000000000001 L24.1,13.8 L19.5,16.4 Z" fill="#fff"/><path d="M9,10.8 L17.6,15.200000000000001 L17.6,24.4 L9,29.0 L0.40000000000000036,24.4 L0.40000000000000036,15.200000000000001 Z" fill="#505050"/><path d="M9,13.200000000000001 L14.400000000000002,15.200000000000001 L9,19.3 L3.6000000000000005,15.200000000000001 Z" fill="#fff"/><path d="M11,21.0 L15.600000000000001,18.6 L15.600000000000001,23.799999999999997 L11,26.4 Z" fill="#fff"/><path d="M26,10.8 L34.6,15.200000000000001 L34.6,24.4 L26,29.0 L17.4,24.4 L17.4,15.200000000000001 Z" fill="#505050"/><path d="M26,13.200000000000001 L31.400000000000002,15.200000000000001 L26,19.3 L20.599999999999998,15.200000000000001 Z" fill="#fff"/><path d="M28,21.0 L32.6,18.6 L32.6,23.799999999999997 L28,26.4 Z" fill="#fff"/></g></svg>
<div class="a" style="left:2202.8px;top:456.8px;font-size:21.75px;line-height:21.75px;color:#595959;white-space:nowrap;letter-spacing:0.06px;">History of shipments of as...</div>
<svg width="1" height="1" style="left:0;top:0" fill="none" stroke="#555" stroke-width="1.7"><path d="M2510,463.20000000000005 V460.20000000000005 H2494 V476.80000000000007 H2510 V473.80000000000007"/><path d="M2500.3,468.50000000000006 H2509.5"/><path d="M2506.5,465.50000000000006 L2510,468.50000000000006 L2506.5,471.50000000000006" stroke-width="1.6"/></svg>
<svg width="1" height="1" style="left:0;top:0"><rect x="2164" y="460.20000000000005" width="19" height="17.0" rx="1.5" fill="#505050"/><rect x="2165.60" y="465.40" width="3.05" height="2.9" fill="#fafafa"/><rect x="2169.85" y="465.40" width="3.05" height="2.9" fill="#fafafa"/><rect x="2174.10" y="465.40" width="3.05" height="2.9" fill="#fafafa"/><rect x="2178.35" y="465.40" width="3.05" height="2.9" fill="#fafafa"/><rect x="2165.60" y="469.30" width="3.05" height="2.9" fill="#fafafa"/><rect x="2169.85" y="469.30" width="3.05" height="2.9" fill="#fafafa"/><rect x="2174.10" y="469.30" width="3.05" height="2.9" fill="#fafafa"/><rect x="2178.35" y="469.30" width="3.05" height="2.9" fill="#fafafa"/><rect x="2165.60" y="473.20" width="3.05" height="2.9" fill="#fafafa"/><rect x="2169.85" y="473.20" width="3.05" height="2.9" fill="#fafafa"/><rect x="2174.10" y="473.20" width="3.05" height="2.9" fill="#fafafa"/><rect x="2178.35" y="473.20" width="3.05" height="2.9" fill="#fafafa"/><rect x="2168" y="457.20000000000005" width="2.2" height="5" rx="1" fill="#505050"/><rect x="2176.8" y="457.20000000000005" width="2.2" height="5" rx="1" fill="#505050"/></svg>
<div class="a" style="left:2202.8px;top:534.0px;font-size:21.75px;line-height:21.75px;color:#595959;white-space:nowrap;letter-spacing:0.02px;">Shipments detection of as...</div>
<svg width="1" height="1" style="left:0;top:0" fill="none" stroke="#555" stroke-width="1.7"><path d="M2510,540.4000000000001 V537.4000000000001 H2494 V554.0 H2510 V551.0"/><path d="M2500.3,545.7 H2509.5"/><path d="M2506.5,542.7 L2510,545.7 L2506.5,548.7" stroke-width="1.6"/></svg>
<svg width="1" height="1" style="left:0;top:0"><path fill-rule="evenodd" fill="#505050" d="M2177.15,542.25 L2179.50,542.30 L2179.50,544.90 L2177.15,544.95 L2176.31,547.00 L2177.93,548.70 L2176.10,550.53 L2174.40,548.91 L2172.35,549.75 L2172.30,552.10 L2169.70,552.10 L2169.65,549.75 L2167.60,548.91 L2165.90,550.53 L2164.07,548.70 L2165.69,547.00 L2164.85,544.95 L2162.50,544.90 L2162.50,542.30 L2164.85,542.25 L2165.69,540.20 L2164.07,538.50 L2165.90,536.67 L2167.60,538.29 L2169.65,537.45 L2169.70,535.10 L2172.30,535.10 L2172.35,537.45 L2174.40,538.29 L2176.10,536.67 L2177.93,538.50 L2176.31,540.20 Z M2173.6,543.6000000000001 A2.6,2.6 0 1 0 2168.4,543.6000000000001 A2.6,2.6 0 1 0 2173.6,543.6000000000001 Z M2184.87,535.89 L2186.11,535.92 L2186.11,537.68 L2184.87,537.71 L2184.12,539.00 L2184.72,540.09 L2183.19,540.97 L2182.55,539.91 L2181.05,539.91 L2180.41,540.97 L2178.88,540.09 L2179.48,539.00 L2178.73,537.71 L2177.49,537.68 L2177.49,535.92 L2178.73,535.89 L2179.48,534.60 L2178.88,533.51 L2180.41,532.63 L2181.05,533.69 L2182.55,533.69 L2183.19,532.63 L2184.72,533.51 L2184.12,534.60 Z M2183.1000000000004,536.8000000000002 A1.3,1.3 0 1 0 2180.5,536.8000000000002 A1.3,1.3 0 1 0 2183.1000000000004,536.8000000000002 Z M2184.87,549.29 L2186.11,549.32 L2186.11,551.08 L2184.87,551.11 L2184.12,552.40 L2184.72,553.49 L2183.19,554.37 L2182.55,553.31 L2181.05,553.31 L2180.41,554.37 L2178.88,553.49 L2179.48,552.40 L2178.73,551.11 L2177.49,551.08 L2177.49,549.32 L2178.73,549.29 L2179.48,548.00 L2178.88,546.91 L2180.41,546.03 L2181.05,547.09 L2182.55,547.09 L2183.19,546.03 L2184.72,546.91 L2184.12,548.00 Z M2183.1000000000004,550.2000000000002 A1.3,1.3 0 1 0 2180.5,550.2000000000002 A1.3,1.3 0 1 0 2183.1000000000004,550.2000000000002 Z"/></svg>
<div class="a" style="left:2202.8px;top:611.2px;font-size:21.75px;line-height:21.75px;color:#595959;white-space:nowrap;letter-spacing:0.07px;">Temperature of asset 3</div>
<svg width="1" height="1" style="left:0;top:0" fill="none" stroke="#555" stroke-width="1.7"><path d="M2510,617.6 V614.6 H2494 V631.1999999999999 H2510 V628.1999999999999"/><path d="M2500.3,622.9 H2509.5"/><path d="M2506.5,619.9 L2510,622.9 L2506.5,625.9" stroke-width="1.6"/></svg>
<svg width="1" height="1" style="left:0;top:0" fill="none" stroke="#505050" stroke-width="1.7"><path d="M2165.6,623.1 V612.6 a3.1,3.1 0 0 1 6.2,0 V623.1 a4.6,4.6 0 1 1 -6.2,0 Z"/><path d="M2168.7,615.6 V625.1" stroke-width="1.5"/><circle cx="2168.7" cy="625.6" r="1.9" fill="#505050" stroke="none"/><path d="M2174.5,612.6 H2176.5 M2174.5,615.6 H2176.5 M2174.5,618.6 H2176.5" stroke-width="1.4"/></svg>
<div class="a" style="left:2202.8px;top:688.4px;font-size:21.75px;line-height:21.75px;color:#595959;white-space:nowrap;letter-spacing:0.13px;">Client's info about asset 3</div>
<svg width="1" height="1" style="left:0;top:0" fill="none" stroke="#555" stroke-width="1.7"><path d="M2510,694.8 V691.8 H2494 V708.3999999999999 H2510 V705.3999999999999"/><path d="M2500.3,700.0999999999999 H2509.5"/><path d="M2506.5,697.0999999999999 L2510,700.0999999999999 L2506.5,703.0999999999999" stroke-width="1.6"/></svg>
<svg width="1" height="1" style="left:0;top:0" fill="none" stroke="#505050" stroke-width="1.6"><rect x="2166" y="690.8" width="18" height="17.6"/><path d="M2168.9,695.8 H2173.1 M2171,693.6999999999999 V697.8999999999999 M2177.3,695.9999999999999 H2181.2 M2169.2,701.3 L2172.8,704.8999999999999 M2172.8,701.3 L2169.2,704.8999999999999 M2177.3,701.8999999999999 H2181.2 M2177.3,704.4999999999999 H2181.2" stroke-width="1.5"/></svg>
<div class="a" style="left:2202.8px;top:765.6px;font-size:21.75px;line-height:21.75px;color:#595959;white-space:nowrap;letter-spacing:0.25px;">Details about device</div>
<svg width="1" height="1" style="left:0;top:0" fill="none" stroke="#555" stroke-width="1.7"><path d="M2510,772.0 V769.0 H2494 V785.5999999999999 H2510 V782.5999999999999"/><path d="M2500.3,777.3 H2509.5"/><path d="M2506.5,774.3 L2510,777.3 L2506.5,780.3" stroke-width="1.6"/></svg>
<svg width="1" height="1" style="left:0;top:0" fill="none" stroke="#505050" stroke-width="1.6"><rect x="2166" y="768.0" width="18" height="17.6"/><path d="M2168.9,773.0 H2173.1 M2171,770.9 V775.0999999999999 M2177.3,773.1999999999999 H2181.2 M2169.2,778.5 L2172.8,782.0999999999999 M2172.8,778.5 L2169.2,782.0999999999999 M2177.3,779.0999999999999 H2181.2 M2177.3,781.6999999999999 H2181.2" stroke-width="1.5"/></svg>
<div class="a" style="left:2202.8px;top:842.8px;font-size:21.75px;line-height:21.75px;color:#595959;white-space:nowrap;letter-spacing:0.25px;">Draw action</div>
<svg width="1" height="1" style="left:0;top:0" fill="none" stroke="#555" stroke-width="1.7"><path d="M2510,849.2 V846.2 H2494 V862.8 H2510 V859.8"/><path d="M2500.3,854.5 H2509.5"/><path d="M2506.5,851.5 L2510,854.5 L2506.5,857.5" stroke-width="1.6"/></svg>
<svg width="1" height="1" style="left:0;top:0" fill="none" stroke="#505050" stroke-width="1.6"><rect x="2166" y="845.2" width="18" height="17.6"/><path d="M2168.9,850.2 H2173.1 M2171,848.1 V852.3 M2177.3,850.4 H2181.2 M2169.2,855.7 L2172.8,859.3 M2172.8,855.7 L2169.2,859.3 M2177.3,856.3 H2181.2 M2177.3,858.9 H2181.2" stroke-width="1.5"/></svg>
<div class="a" style="left:2202.8px;top:920.0px;font-size:21.75px;line-height:21.75px;color:#595959;white-space:nowrap;letter-spacing:0.17px;">History of locations of acti...</div>
<svg width="1" height="1" style="left:0;top:0" fill="none" stroke="#555" stroke-width="1.7"><path d="M2510,926.4000000000001 V923.4000000000001 H2494 V940.0 H2510 V937.0"/><path d="M2500.3,931.7 H2509.5"/><path d="M2506.5,928.7 L2510,931.7 L2506.5,934.7" stroke-width="1.6"/></svg>
<svg width="1" height="1" style="left:0;top:0" fill="none" stroke="#505050" stroke-width="1.6"><rect x="2166" y="922.4000000000001" width="18" height="17.6"/><path d="M2168.9,927.4000000000001 H2173.1 M2171,925.3000000000001 V929.5 M2177.3,927.6 H2181.2 M2169.2,932.9000000000001 L2172.8,936.5 M2172.8,932.9000000000001 L2169.2,936.5 M2177.3,933.5 H2181.2 M2177.3,936.1 H2181.2" stroke-width="1.5"/></svg>
<div class="a" style="left:2202.8px;top:997.2px;font-size:21.75px;line-height:21.75px;color:#595959;white-space:nowrap;letter-spacing:0.06px;">History of shipments of as...</div>
<svg width="1" height="1" style="left:0;top:0" fill="none" stroke="#555" stroke-width="1.7"><path d="M2510,1003.6000000000001 V1000.6000000000001 H2494 V1017.2 H2510 V1014.2"/><path d="M2500.3,1008.9000000000001 H2509.5"/><path d="M2506.5,1005.9000000000001 L2510,1008.9000000000001 L2506.5,1011.9000000000001" stroke-width="1.6"/></svg>
<svg width="1" height="1" style="left:0;top:0" fill="none" stroke="#505050" stroke-width="1.6"><rect x="2166" y="999.6000000000001" width="18" height="17.6"/><path d="M2168.9,1004.6000000000001 H2173.1 M2171,1002.5000000000001 V1006.7 M2177.3,1004.8000000000001 H2181.2 M2169.2,1010.1000000000001 L2172.8,1013.7 M2172.8,1010.1000000000001 L2169.2,1013.7 M2177.3,1010.7 H2181.2 M2177.3,1013.3000000000001 H2181.2" stroke-width="1.5"/></svg>
<div class="a" style="left:2203.0px;top:1074.4px;font-size:21.75px;line-height:21.75px;color:#595959;white-space:nowrap;letter-spacing:0.09px;">Last positions of asset 3</div>
<svg width="1" height="1" style="left:0;top:0" fill="none" stroke="#555" stroke-width="1.7"><path d="M2510,1080.8 V1077.8 H2494 V1094.3999999999999 H2510 V1091.3999999999999"/><path d="M2500.3,1086.1 H2509.5"/><path d="M2506.5,1083.1 L2510,1086.1 L2506.5,1089.1" stroke-width="1.6"/></svg>
<svg width="1" height="1" style="left:0;top:0" fill="none" stroke="#505050" stroke-width="1.6"><rect x="2166" y="1076.8" width="18" height="17.6"/><path d="M2168.9,1081.8 H2173.1 M2171,1079.6999999999998 V1083.8999999999999 M2177.3,1082.0 H2181.2 M2169.2,1087.3 L2172.8,1090.8999999999999 M2172.8,1087.3 L2169.2,1090.8999999999999 M2177.3,1087.8999999999999 H2181.2 M2177.3,1090.5 H2181.2" stroke-width="1.5"/></svg>
<div class="a" style="left:2203.0px;top:1151.6px;font-size:21.75px;line-height:21.75px;color:#595959;white-space:nowrap;letter-spacing:-0.29px;">Path for action GAAAAAA...</div>
<svg width="1" height="1" style="left:0;top:0" fill="none" stroke="#555" stroke-width="1.7"><path d="M2510,1158.0 V1155.0 H2494 V1171.6 H2510 V1168.6"/><path d="M2500.3,1163.3 H2509.5"/><path d="M2506.5,1160.3 L2510,1163.3 L2506.5,1166.3" stroke-width="1.6"/></svg>
<svg width="1" height="1" style="left:0;top:0" fill="none" stroke="#505050" stroke-width="1.6"><rect x="2166" y="1154.0" width="18" height="17.6"/><path d="M2168.9,1159.0 H2173.1 M2171,1156.8999999999999 V1161.1 M2177.3,1159.2 H2181.2 M2169.2,1164.5 L2172.8,1168.1 M2172.8,1164.5 L2169.2,1168.1 M2177.3,1165.1 H2181.2 M2177.3,1167.7 H2181.2" stroke-width="1.5"/></svg>
<div class="a" style="left:2207.3px;top:1304.6px;font-size:21.75px;line-height:21.75px;color:#595959;white-space:nowrap;letter-spacing:0.13px;">Asset utilization</div>
<svg width="1" height="1" style="left:0;top:0" fill="none" stroke="#555" stroke-width="1.7"><path d="M2510,1312.5 V1309.5 H2494 V1326.1 H2510 V1323.1"/><path d="M2500.3,1317.8 H2509.5"/><path d="M2506.5,1314.8 L2510,1317.8 L2506.5,1320.8" stroke-width="1.6"/></svg>
<svg width="1" height="1" style="left:2163.5px;top:1305.7px"><g transform="scale(0.73)"><path d="M17.5,0.8000000000000014 L26.1,5.200000000000001 L26.1,14.4 L17.5,19.0 L8.9,14.4 L8.9,5.200000000000001 Z" fill="#505050"/><path d="M17.5,3.2000000000000015 L22.900000000000002,5.200000000000001 L17.5,9.3 L12.100000000000001,5.200000000000001 Z" fill="#fff"/><path d="M19.5,11.0 L24.1,8.600000000000001 L24.1,13.8 L19.5,16.4 Z" fill="#fff"/><path d="M9,10.8 L17.6,15.200000000000001 L17.6,24.4 L9,29.0 L0.40000000000000036,24.4 L0.40000000000000036,15.200000000000001 Z" fill="#505050"/><path d="M9,13.200000000000001 L14.400000000000002,15.200000000000001 L9,19.3 L3.6000000000000005,15.200000000000001 Z" fill="#fff"/><path d="M11,21.0 L15.600000000000001,18.6 L15.600000000000001,23.799999999999997 L11,26.4 Z" fill="#fff"/><path d="M26,10.8 L34.6,15.200000000000001 L34.6,24.4 L26,29.0 L17.4,24.4 L17.4,15.200000000000001 Z" fill="#505050"/><path d="M26,13.200000000000001 L31.400000000000002,15.200000000000001 L26,19.3 L20.599999999999998,15.200000000000001 Z" fill="#fff"/><path d="M28,21.0 L32.6,18.6 L32.6,23.799999999999997 L28,26.4 Z" fill="#fff"/></g></svg>
<div class="a" style="left:2488.5px;top:1324.7px;width:52.6px;height:52.6px;border-radius:50%;background:#fff;box-shadow:0 2px 8px rgba(0,0,0,0.15)"></div>
<svg width="1" height="1" style="left:0;top:0"><defs>
<linearGradient id="cu1" x1="0" y1="0" x2="1" y2="0"><stop offset="0" stop-color="#ff02f0"/><stop offset="1" stop-color="#ffc800"/></linearGradient>
<linearGradient id="cu2" x1="0" y1="0" x2="1" y2="0"><stop offset="0" stop-color="#8930fd"/><stop offset="1" stop-color="#49ccf9"/></linearGradient></defs>
<path d="M2502.2,1348.5 L2514.3,1337.2 L2526.6,1348.5" fill="none" stroke="url(#cu1)" stroke-width="6.8" stroke-linejoin="miter"/>
<path d="M2502,1360.5 Q2514.3,1372.5 2526.8,1360.5" fill="none" stroke="url(#cu2)" stroke-width="6.8"/>
</svg>
<div class="a" style="left:2526px;top:712px;width:2px;height:44px;background:#e0e0e0;border-radius:1px"></div>
</body></html>
